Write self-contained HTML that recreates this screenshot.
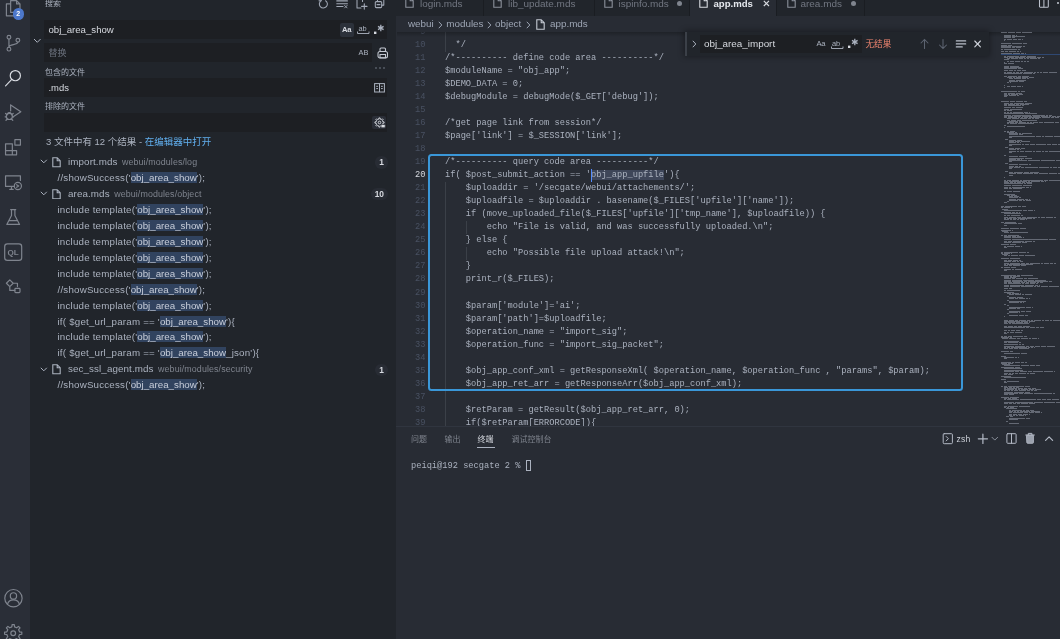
<!DOCTYPE html><html lang="zh-CN"><head><meta charset="utf-8"><title>app.mds</title><style>
*{box-sizing:border-box;margin:0;padding:0}
html,body{width:1060px;height:639px;overflow:hidden;background:#282c34}
body{position:relative;font-family:"Liberation Sans","Noto Sans CJK SC",sans-serif;color:#abb2bf;font-size:9.4px;-webkit-font-smoothing:antialiased;filter:blur(.5px)}
.abs{position:absolute}
#act{left:0;top:0;width:30px;height:639px;background:#2a2e37}
#act svg{position:absolute;left:2.5px;width:20.4px;height:20.4px;fill:none;stroke:#7f848e;stroke-width:1.4;stroke-linecap:round;stroke-linejoin:round}
#act svg.on{stroke:#d7dae0}
#side{left:30px;top:0;width:366.3px;height:639px;background:#21252b}
.inp{position:absolute;background:#1d1f23;height:19px}
.lbl{position:absolute;font-size:8px;color:#abb2bf;line-height:10px;white-space:nowrap}
.row{position:absolute;left:30px;width:366px;height:16px;line-height:16px;white-space:nowrap;color:#abb2bf;font-size:9.75px;letter-spacing:.2px}
.row .fn{position:absolute;left:38px;font-size:9.8px;letter-spacing:.1px}
.row .pth{font-size:8.9px;color:#7f848e;margin-left:4.5px;letter-spacing:.1px}
.row .m{position:absolute;left:27.5px}
.row .hl{background:#31435f;color:#c8ceda;letter-spacing:0}
.badge{position:absolute;top:2.4px;height:12.2px;border-radius:6.1px;background:#282c34;color:#d7dae0;font-size:8.4px;line-height:12.2px;text-align:center;font-weight:bold;letter-spacing:0}
.row svg{position:absolute;fill:none;stroke:#abb2bf;stroke-width:1}
#tabs{left:396px;top:0;width:664px;height:16px;background:#21252b}
.tab{position:absolute;top:0;height:16px;border-right:1px solid #1a1d22;color:#727782;font-size:9.95px;line-height:10px;white-space:nowrap}
.tab.on{background:#282c34;color:#e6e9ef;font-weight:bold;font-size:9.6px}
.tab span{position:absolute;top:-1.2px}
.tab svg{position:absolute;fill:none;stroke:#8a909b;stroke-width:1.1}
.tab.on svg{stroke:#d7dae0}
#bc{left:396px;top:16px;width:664px;height:16px;line-height:16px;font-size:9.85px;color:#9da5b4;white-space:nowrap}
#bc span{position:absolute;top:0}
.ln{position:absolute;left:396px;width:29.5px;text-align:right;font-family:"Liberation Mono",monospace;font-size:8.7px;height:13.045px;line-height:13.045px;color:#495162}
.ln.cur{color:#d7dae0}
.cl{position:absolute;left:445px;font-family:"Liberation Mono",monospace;font-size:8.7px;height:13.045px;line-height:13.045px;color:#abb2bf;white-space:pre}
.guide{position:absolute;width:1px;background:#3b4048}
#find{left:685px;top:32px;width:304px;height:24px;background:#21252b;box-shadow:0 0 5.8px 1.4px rgba(0,0,0,.36)}
#panel{left:396px;top:425.5px;width:664px;height:214px;background:#282c34;border-top:1.5px solid #30353f}
.ptab{position:absolute;top:8.2px;font-size:8px;line-height:10px;color:#7f848e;white-space:nowrap}
.mm{position:absolute;height:1.1px;background:#abb2bf}
</style></head><body>
<div id="act" class="abs">
<svg viewBox="0 0 24 24" style="top:-2.0px" class=""><path d="M9 3h7l4 4v10H9z M16 3v4h4 M9 7H4v14h11v-4"/></svg>
<svg viewBox="0 0 24 24" style="top:32.8px" class=""><circle cx="7" cy="5" r="2.2"/><circle cx="7" cy="19" r="2.2"/><circle cx="17.5" cy="8.5" r="2.2"/><path d="M7 7.2v9.6 M17.5 10.7c0 4-10.5 2-10.5 6"/></svg>
<svg viewBox="0 0 24 24" style="top:67.6px" class="on" stroke-width="1.6"><circle cx="14.5" cy="9" r="6"/><path d="M10.3 13.4L3 21"/></svg>
<svg viewBox="0 0 24 24" style="top:102.4px" class=""><path d="M9 3.5l12 8-9 6"/><path d="M9 3.5v7"/><circle cx="7.5" cy="17" r="3.6"/><path d="M3 13.5l2 1.5 M12 13.5l-2 1.5 M2.5 17.5h1.5 M11 17.5h1.5 M3.5 21.5l1.7-1.5 M11.5 21.5l-1.7-1.5 M5.5 13.6c.5-1.6 3.5-1.6 4 0"/></svg>
<svg viewBox="0 0 24 24" style="top:137.2px" class=""><path d="M3 8h8v8H3z M3 16v5h8v-5 M11 16h5v5h-5 M14 3h6.5v6.5H14z"/></svg>
<svg viewBox="0 0 24 24" style="top:172.0px" class=""><path d="M13 17H3V4.5h17.5V10 M8 20.5h4 M10 17v3.5"/><circle cx="17.5" cy="16.5" r="4.2"/><path d="M16 15l2.5 1.5-2.5 1.5"/></svg>
<svg viewBox="0 0 24 24" style="top:206.8px" class=""><path d="M9 3h6 M10 3v7L4.5 20.5h15L14 10V3 M7 16h10"/></svg>
<svg viewBox="0 0 24 24" style="top:241.6px" class=""><rect x="2" y="2.300" width="20" height="19.400" rx="3.200"/><text x="12" y="15.500" font-size="9.500" font-family="Liberation Sans,sans-serif" font-weight="bold" text-anchor="middle" fill="#7f848e" stroke="none">QL</text></svg>
<svg viewBox="0 0 24 24" style="top:276.4px" class=""><path d="M4 8.5l4-4 4 4-4 4z M8 12.5V17h6 M12 8.5h5v4"/><rect x="14" y="14.5" width="6" height="5" rx="1"/></svg>
<svg viewBox="0 0 24 24" style="top:588.1px" class=""><circle cx="12.3" cy="12" r="10.2"/><circle cx="12.3" cy="9.3" r="3.7"/><path d="M5.3 19.300c1.500-7 12.500-7 14 0"/></svg>
<svg viewBox="0 0 24 24" style="top:622.8px" class=""><circle cx="12" cy="12" r="2.8"/><path d="M10.40 4.57 L10.72 1.88 L13.28 1.88 L13.60 4.57 L16.12 5.62 L18.25 3.94 L20.06 5.75 L18.38 7.88 L19.43 10.40 L22.12 10.72 L22.12 13.28 L19.43 13.60 L18.38 16.12 L20.06 18.25 L18.25 20.06 L16.12 18.38 L13.60 19.43 L13.28 22.12 L10.72 22.12 L10.40 19.43 L7.88 18.38 L5.75 20.06 L3.94 18.25 L5.62 16.12 L4.57 13.60 L1.88 13.28 L1.88 10.72 L4.57 10.40 L5.62 7.88 L3.94 5.75 L5.75 3.94 L7.88 5.62Z"/></svg>
<div class="abs" style="left:12.5px;top:8.3px;width:11.6px;height:11.6px;border-radius:6px;background:#4d78cc;color:#fff;font-size:7px;line-height:11.6px;text-align:center;font-weight:bold">2</div>
</div>
<div id="side" class="abs"></div>
<div class="lbl" style="left:45px;top:-1.5px;font-size:8px;color:#abb2bf">搜索</div>
<svg class="abs" style="left:316px;top:-4px" width="76" height="16" viewBox="316 -4 76 16" fill="none" stroke="#a2a9b6" stroke-width="1.05" stroke-linecap="round" stroke-linejoin="round"><path d="M325.600 0.700a4 4 0 1 1-4.300-.100 M321.200 -1.600v2.300h-2.200"/><path d="M336.800 0.900h10.600 M336.800 3.700h10.600 M336.800 6.500h6.200" stroke-width="1.15"/><path d="M344.600 5.400l2.500 2.500 M347.100 5.400l-2.500 2.500" stroke-width=".9"/><path d="M362.500 1.500v-4l-1.500-1.500h-4v12h4"/><path d="M364.300 3.700v5.400 M361.600 6.400h5.400" stroke-width="1.1"/><rect x="375.300" y="1.600" width="6.400" height="6" rx="1"/><path d="M377.500 1.400v-2.300h6.300v6h-2 M377 4.600h3" /></svg>
<div class="inp" style="left:44.4px;top:20.4px;width:342.8px;height:18.8px"></div>
<div class="abs" style="left:48.5px;top:24px;font-size:9.65px;line-height:11px;color:#d7dae0;white-space:nowrap">obj_area_show</div>
<div class="abs" style="left:340px;top:22.5px;width:14px;height:14px;background:#2c313a;border-radius:2px"></div>
<div class="abs" style="left:342px;top:24.5px;font-size:7.6px;line-height:10px;color:#d7dae0;font-weight:bold;letter-spacing:-.3px">Aa</div>
<div class="abs" style="left:358.5px;top:24px;font-size:7.4px;line-height:10px;color:#abb2bf;letter-spacing:-.2px">ab</div>
<svg class="abs" style="left:356.5px;top:31px" width="13" height="4" viewBox="0 0 13 4" fill="none" stroke="#abb2bf" stroke-width=".9"><path d="M.5 .5v2h11.5v-2"/></svg>
<svg class="abs" style="left:373px;top:24px" width="12" height="12" viewBox="0 0 12 12" fill="none" stroke="#abb2bf" stroke-width="1.1"><rect x="1" y="7.6" width="2.4" height="2.4" fill="#d7dae0" stroke="none"/><path d="M7.8 .8v6.400 M5 2.400l5.600 3.200 M10.600 2.400l-5.600 3.200" stroke-width="1.3"/></svg>
<svg class="abs" style="left:33px;top:38px" width="9" height="6" viewBox="0 0 9 6" fill="none" stroke="#abb2bf" stroke-width="1"><path d="M1 1l3.3 3.3L7.6 1"/></svg>
<div class="inp" style="left:44.4px;top:43.4px;width:327.800px;height:18.8px"></div>
<div class="abs" style="left:48.5px;top:47.5px;font-size:9px;line-height:11px;color:#6b717d;white-space:nowrap">替换</div>
<div class="abs" style="left:358.5px;top:48px;font-size:7.4px;line-height:10px;color:#abb2bf">AB</div>
<svg class="abs" style="left:377px;top:46.5px" width="12" height="13" viewBox="0 0 12 13" fill="none" stroke="#c5cad3" stroke-width="1.05"><rect x="3" y="1" width="5.5" height="3.5" rx="1"/><rect x="1" y="4.5" width="9.5" height="6.5" rx="2"/><path d="M3 7.5h5.5v3.3h-5.5z"/></svg>
<div class="abs" style="left:375px;top:67.3px;width:2px;height:2px;border-radius:1px;background:#555b66;box-shadow:4px 0 #555b66,8px 0 #555b66"></div>
<div class="lbl" style="left:45px;top:67.7px">包含的文件</div>
<div class="inp" style="left:44.4px;top:78.300px;width:342.800px;height:19px"></div>
<div class="abs" style="left:48.5px;top:82px;font-size:9.45px;line-height:11px;color:#d7dae0">.mds</div>
<svg class="abs" style="left:373.5px;top:82.5px" width="11" height="10" viewBox="0 0 11 10" fill="none" stroke="#abb2bf" stroke-width="1"><rect x=".6" y=".6" width="9.8" height="8.4"/><path d="M5.5 .6v8.4 M2.2 3.3h1.8 M2.2 5.6h1.8 M7 3.3h1.8 M7 5.6h1.8"/></svg>
<div class="lbl" style="left:45px;top:101.7px">排除的文件</div>
<div class="inp" style="left:44.4px;top:113px;width:342.800px;height:19.300px"></div>
<div class="abs" style="left:372.3px;top:115.700px;width:14.2px;height:13.800px;background:#2a2e37;border-radius:2px"></div>
<svg class="abs" style="left:374px;top:117px" width="12" height="12" viewBox="0 0 12 12" fill="none" stroke="#d7dae0" stroke-width=".95" stroke-linejoin="round"><path d="M4.76 2.18 L4.89 0.94 L6.11 0.94 L6.24 2.18 L7.32 2.63 L8.29 1.84 L9.16 2.71 L8.37 3.68 L8.82 4.76 L10.06 4.89 L10.06 6.11 L8.82 6.24 L8.37 7.32 L9.16 8.29 L8.29 9.16 L7.32 8.37 L6.24 8.82 L6.11 10.06 L4.89 10.06 L4.76 8.82 L3.68 8.37 L2.71 9.16 L1.84 8.29 L2.63 7.32 L2.18 6.24 L0.94 6.11 L0.94 4.89 L2.18 4.76 L2.63 3.68 L1.84 2.71 L2.71 1.84 L3.68 2.63Z"/><circle cx="5.5" cy="5.5" r="1.3"/><rect x="7" y="7.400" width="4.200" height="3.400" rx=".8" fill="#d7dae0" stroke="#2a2e37" stroke-width=".7"/></svg>
<div class="abs" style="left:46px;top:136px;font-size:9.5px;line-height:11px;color:#abb2bf;white-space:nowrap">3 文件中有 12 个结果 - <span style="color:#61afef">在编辑器中打开</span></div>
<div class="row" style="top:154.0px">
<svg style="left:9.5px;top:5.2px" width="8" height="6" viewBox="0 0 8 6"><path d="M.8 .8l3 3 3-3"/></svg>
<svg style="left:22.3px;top:3px" width="9" height="10.5" viewBox="0 0 9 10.5"><path d="M.8 .7h4.4l3 3v6H.8z M5.2 .7v3h3" stroke-width="1.1"/></svg>
<span class="fn">import.mds<span class="pth">webui/modules/log</span></span>
<div class="badge" style="left:345.4px;width:12.6px">1</div>
</div>
<div class="row" style="top:169.9px"><span class="m">//showSuccess(&#x27;<span class="hl">obj_area_show</span>&#x27;);</span></div>
<div class="row" style="top:185.9px">
<svg style="left:9.5px;top:5.2px" width="8" height="6" viewBox="0 0 8 6"><path d="M.8 .8l3 3 3-3"/></svg>
<svg style="left:22.3px;top:3px" width="9" height="10.5" viewBox="0 0 9 10.5"><path d="M.8 .7h4.4l3 3v6H.8z M5.2 .7v3h3" stroke-width="1.1"/></svg>
<span class="fn">area.mds<span class="pth">webui/modules/object</span></span>
<div class="badge" style="left:340.6px;width:17.4px">10</div>
</div>
<div class="row" style="top:201.8px"><span class="m">include template(&#x27;<span class="hl">obj_area_show</span>&#x27;);</span></div>
<div class="row" style="top:217.8px"><span class="m">include template(&#x27;<span class="hl">obj_area_show</span>&#x27;);</span></div>
<div class="row" style="top:233.8px"><span class="m">include template(&#x27;<span class="hl">obj_area_show</span>&#x27;);</span></div>
<div class="row" style="top:249.7px"><span class="m">include template(&#x27;<span class="hl">obj_area_show</span>&#x27;);</span></div>
<div class="row" style="top:265.6px"><span class="m">include template(&#x27;<span class="hl">obj_area_show</span>&#x27;);</span></div>
<div class="row" style="top:281.6px"><span class="m">//showSuccess(&#x27;<span class="hl">obj_area_show</span>&#x27;);</span></div>
<div class="row" style="top:297.5px"><span class="m">include template(&#x27;<span class="hl">obj_area_show</span>&#x27;);</span></div>
<div class="row" style="top:313.5px"><span class="m">if( $get_url_param == &#x27;<span class="hl">obj_area_show</span>&#x27;){</span></div>
<div class="row" style="top:329.4px"><span class="m">include template(&#x27;<span class="hl">obj_area_show</span>&#x27;);</span></div>
<div class="row" style="top:345.4px"><span class="m">if( $get_url_param == &#x27;<span class="hl">obj_area_show</span>_json&#x27;){</span></div>
<div class="row" style="top:361.4px">
<svg style="left:9.5px;top:5.2px" width="8" height="6" viewBox="0 0 8 6"><path d="M.8 .8l3 3 3-3"/></svg>
<svg style="left:22.3px;top:3px" width="9" height="10.5" viewBox="0 0 9 10.5"><path d="M.8 .7h4.4l3 3v6H.8z M5.2 .7v3h3" stroke-width="1.1"/></svg>
<span class="fn">sec_ssl_agent.mds<span class="pth">webui/modules/security</span></span>
<div class="badge" style="left:345.4px;width:12.6px">1</div>
</div>
<div class="row" style="top:377.3px"><span class="m">//showSuccess(&#x27;<span class="hl">obj_area_show</span>&#x27;);</span></div>
<div id="tabs" class="abs"></div>
<div class="tab" style="left:396.0px;width:87.5px">
<svg style="left:8.5px;top:-3px" width="9" height="11" viewBox="0 0 9 11"><path d="M.8 .7h4.4l3 3v6.5H.8z M5.2 .7v3h3"/></svg>
<span style="left:24.0px">login.mds</span>
</div>
<div class="tab" style="left:483.5px;width:111.0px">
<svg style="left:9.5px;top:-3px" width="9" height="11" viewBox="0 0 9 11"><path d="M.8 .7h4.4l3 3v6.5H.8z M5.2 .7v3h3"/></svg>
<span style="left:24.5px">lib_update.mds</span>
</div>
<div class="tab" style="left:594.5px;width:95.5px">
<svg style="left:9.5px;top:-3px" width="9" height="11" viewBox="0 0 9 11"><path d="M.8 .7h4.4l3 3v6.5H.8z M5.2 .7v3h3"/></svg>
<span style="left:24.0px">ispinfo.mds</span>
<div class="abs" style="left:82.3px;top:0.5px;width:5.4px;height:5.4px;border-radius:3px;background:#7f848e"></div>
</div>
<div class="tab on" style="left:690.0px;width:86.5px">
<svg style="left:9.0px;top:-3px" width="9" height="11" viewBox="0 0 9 11"><path d="M.8 .7h4.4l3 3v6.5H.8z M5.2 .7v3h3"/></svg>
<span style="left:23.5px">app.mds</span>
<svg style="left:72.8px;top:0.3px;stroke:#d7dae0" width="7" height="7" viewBox="0 0 7 7"><path d="M.8 .8l5.2 5.2 M6 .8L.8 6"/></svg>
</div>
<div class="tab" style="left:776.5px;width:88.5px">
<svg style="left:10.5px;top:-3px" width="9" height="11" viewBox="0 0 9 11"><path d="M.8 .7h4.4l3 3v6.5H.8z M5.2 .7v3h3"/></svg>
<span style="left:24.0px">area.mds</span>
<div class="abs" style="left:74.1px;top:0.5px;width:5.4px;height:5.4px;border-radius:3px;background:#7f848e"></div>
</div>
<svg class="abs" style="left:1038px;top:-4px" width="12" height="13" viewBox="0 0 12 13" fill="none" stroke="#bcc2cd" stroke-width="1.05"><rect x="1.500" y="-2" width="8.800" height="13.200" rx=".8"/><path d="M5.900 -2v13.200"/></svg>
<div class="abs" style="left:1057.4px;top:2.4px;width:1.8px;height:1.8px;border-radius:1px;background:#c5cad3"></div>
<div id="bc" class="abs">
<span style="left:12.0px">webui</span>
<span style="left:50.3px">modules</span>
<span style="left:99.0px">object</span>
<span style="left:154.0px">app.mds</span>
<svg class="abs" style="left:41.5px;top:4.5px" width="5" height="8" viewBox="0 0 5 8" fill="none" stroke="#9da5b4" stroke-width="1"><path d="M.8 .8l3 3.2-3 3.2"/></svg>
<svg class="abs" style="left:90.5px;top:4.5px" width="5" height="8" viewBox="0 0 5 8" fill="none" stroke="#9da5b4" stroke-width="1"><path d="M.8 .8l3 3.2-3 3.2"/></svg>
<svg class="abs" style="left:129.5px;top:4.5px" width="5" height="8" viewBox="0 0 5 8" fill="none" stroke="#9da5b4" stroke-width="1"><path d="M.8 .8l3 3.2-3 3.2"/></svg>
<svg class="abs" style="left:139.5px;top:2.5px" width="9" height="11" viewBox="0 0 9 11" fill="none" stroke="#c5cad3" stroke-width="1.1"><path d="M.8 .7h4.4l3 3v6.5H.8z M5.2 .7v3h3"/></svg>
</div>
<div class="abs" style="left:396px;top:32px;width:605px;height:394px;overflow:hidden"><div class="abs" style="left:-396px;top:-32px;width:1060px;height:639px">
<div class="ln" style="top:25.63px">9</div>
<div class="cl" style="top:25.63px">  *</div>
<div class="ln" style="top:38.68px">10</div>
<div class="cl" style="top:38.68px">  */</div>
<div class="ln" style="top:51.72px">11</div>
<div class="cl" style="top:51.72px">/*---------- define code area ----------*/</div>
<div class="ln" style="top:64.77px">12</div>
<div class="cl" style="top:64.77px">$moduleName = "obj_app";</div>
<div class="ln" style="top:77.81px">13</div>
<div class="cl" style="top:77.81px">$DEMO_DATA = 0;</div>
<div class="ln" style="top:90.86px">14</div>
<div class="cl" style="top:90.86px">$debugModule = debugMode($_GET['debug']);</div>
<div class="ln" style="top:103.90px">15</div>
<div class="ln" style="top:116.95px">16</div>
<div class="cl" style="top:116.95px">/*get page link from session*/</div>
<div class="ln" style="top:129.99px">17</div>
<div class="cl" style="top:129.99px">$page['link'] = $_SESSION['link'];</div>
<div class="ln" style="top:143.04px">18</div>
<div class="ln" style="top:156.08px">19</div>
<div class="cl" style="top:156.08px">/*---------- query code area ----------*/</div>
<div class="ln cur" style="top:169.13px">20</div>
<div class="cl" style="top:169.13px">if( $post_submit_action == '<span style="background:#3e4659">obj_app_upfile</span>'){</div>
<div class="ln" style="top:182.17px">21</div>
<div class="cl" style="top:182.17px">    $uploaddir = '/secgate/webui/attachements/';</div>
<div class="ln" style="top:195.22px">22</div>
<div class="cl" style="top:195.22px">    $uploadfile = $uploaddir . basename($_FILES['upfile']['name']);</div>
<div class="ln" style="top:208.26px">23</div>
<div class="cl" style="top:208.26px">    if (move_uploaded_file($_FILES['upfile']['tmp_name'], $uploadfile)) {</div>
<div class="ln" style="top:221.31px">24</div>
<div class="cl" style="top:221.31px">        echo "File is valid, and was successfully uploaded.\n";</div>
<div class="ln" style="top:234.35px">25</div>
<div class="cl" style="top:234.35px">    } else {</div>
<div class="ln" style="top:247.40px">26</div>
<div class="cl" style="top:247.40px">        echo "Possible file upload attack!\n";</div>
<div class="ln" style="top:260.44px">27</div>
<div class="cl" style="top:260.44px">    }</div>
<div class="ln" style="top:273.49px">28</div>
<div class="cl" style="top:273.49px">    print_r($_FILES);</div>
<div class="ln" style="top:286.53px">29</div>
<div class="ln" style="top:299.58px">30</div>
<div class="cl" style="top:299.58px">    $param['module']='ai';</div>
<div class="ln" style="top:312.62px">31</div>
<div class="cl" style="top:312.62px">    $param['path']=$uploadfile;</div>
<div class="ln" style="top:325.67px">32</div>
<div class="cl" style="top:325.67px">    $operation_name = "import_sig";</div>
<div class="ln" style="top:338.71px">33</div>
<div class="cl" style="top:338.71px">    $operation_func = "import_sig_packet";</div>
<div class="ln" style="top:351.76px">34</div>
<div class="ln" style="top:364.80px">35</div>
<div class="cl" style="top:364.80px">    $obj_app_conf_xml = getResponseXml( $operation_name, $operation_func , "params", $param);</div>
<div class="ln" style="top:377.85px">36</div>
<div class="cl" style="top:377.85px">    $obj_app_ret_arr = getResponseArr($obj_app_conf_xml);</div>
<div class="ln" style="top:390.89px">37</div>
<div class="ln" style="top:403.94px">38</div>
<div class="cl" style="top:403.94px">    $retParam = getResult($obj_app_ret_arr, 0);</div>
<div class="ln" style="top:416.98px">39</div>
<div class="cl" style="top:416.98px">    if($retParam[ERRORCODE]){</div>
<div class="guide" style="left:445px;top:32px;height:19.7px"></div>
<div class="guide" style="left:445px;top:182.2px;height:243.8px"></div>
<div class="guide" style="left:465.9px;top:221.3px;height:13.0px"></div>
<div class="guide" style="left:465.9px;top:247.4px;height:13.0px"></div>
<div class="abs" style="left:591.2px;top:169.1px;width:1px;height:13.0px;background:#528bff"></div>
</div></div>
<div class="abs" style="left:397px;top:32px;width:663px;height:5px;background:linear-gradient(rgba(0,0,0,.24),rgba(0,0,0,0))"></div>
<div class="abs" style="left:428px;top:153.5px;width:534.5px;height:237px;border:2.4px solid #3a97d8;border-radius:3.5px"></div>
<div id="find" class="abs">
<div class="abs" style="left:0;top:0;width:2.4px;height:24px;background:#3b4048"></div>
<svg class="abs" style="left:6.5px;top:8px" width="5" height="8" viewBox="0 0 5 8" fill="none" stroke="#abb2bf" stroke-width="1"><path d="M.8 .8l3 3.2-3 3.2"/></svg>
<div class="abs" style="left:15px;top:3px;width:162px;height:18px;background:#1d1f23"></div>
<div class="abs" style="left:19px;top:5.7px;font-size:9.85px;line-height:11px;color:#d7dae0;white-space:nowrap">obj_area_import</div>
<div class="abs" style="left:131.5px;top:7px;font-size:7.6px;line-height:10px;color:#abb2bf;letter-spacing:-.3px">Aa</div>
<div class="abs" style="left:147px;top:6.5px;font-size:7.4px;line-height:10px;color:#abb2bf;letter-spacing:-.2px">ab</div>
<svg class="abs" style="left:145.5px;top:13.5px" width="13" height="4" viewBox="0 0 13 4" fill="none" stroke="#abb2bf" stroke-width=".9"><path d="M.5 .5v2h11.5v-2"/></svg>
<svg class="abs" style="left:162px;top:6px" width="12" height="12" viewBox="0 0 12 12" fill="none" stroke="#abb2bf" stroke-width="1.1"><rect x="1" y="7.6" width="2.4" height="2.4" fill="#d7dae0" stroke="none"/><path d="M7.8 .8v6.400 M5 2.400l5.600 3.200 M10.600 2.400l-5.600 3.200" stroke-width="1.3"/></svg>
<div class="abs" style="left:180.5px;top:7px;font-size:8.6px;line-height:10px;color:#f48771;white-space:nowrap">无结果</div>
<svg class="abs" style="left:234px;top:6px" width="64" height="12" viewBox="0 0 64 12" fill="none" stroke-width="1.05" stroke-linecap="round"><path d="M5.5 10.5v-9 M2 5l3.500-3.500 3.500 3.500" stroke="#5c6370"/><path d="M24 1.500v9 M20.500 7l3.500 3.500 3.500-3.500" stroke="#5c6370"/><path d="M37.300 2.900h9.400 M37.300 5.900h9.400 M37.300 8.900h6" stroke="#b9bfca" stroke-width="1.15"/><path d="M55.800 3l5.600 5.800 M61.400 3l-5.600 5.800" stroke="#cdd1d9" stroke-width="1.15"/></svg>
</div>
<div class="abs" style="left:1001px;top:32px;width:59px;height:393px;overflow:hidden;opacity:.46">
<div class="mm" style="left:0.3px;top:-0.2px;width:5.6px"></div>
<div class="mm" style="left:6.6px;top:-0.2px;width:7.5px"></div>
<div class="mm" style="left:14.8px;top:-0.2px;width:5.6px"></div>
<div class="mm" style="left:21.1px;top:-0.2px;width:5.6px"></div>
<div class="mm" style="left:27.4px;top:-0.2px;width:3.9px"></div>
<div class="mm" style="left:2.8px;top:2.5px;width:7.5px"></div>
<div class="mm" style="left:11.0px;top:2.5px;width:3.1px"></div>
<div class="mm" style="left:14.8px;top:2.5px;width:1.5px"></div>
<div class="mm" style="left:2.8px;top:3.8px;width:7.5px"></div>
<div class="mm" style="left:11.0px;top:3.8px;width:5.6px"></div>
<div class="mm" style="left:17.3px;top:3.8px;width:6.5px"></div>
<div class="mm" style="left:2.8px;top:5.0px;width:7.5px"></div>
<div class="mm" style="left:11.0px;top:5.0px;width:3.1px"></div>
<div class="mm" style="left:2.8px;top:6.5px;width:2.2px"></div>
<div class="mm" style="left:5.7px;top:6.5px;width:5.6px"></div>
<div class="mm" style="left:12.0px;top:6.5px;width:4.3px"></div>
<div class="mm" style="left:17.0px;top:6.5px;width:3.1px"></div>
<div class="mm" style="left:20.8px;top:6.5px;width:0.5px"></div>
<div class="mm" style="left:2.8px;top:8.1px;width:1.6px"></div>
<div class="mm" style="left:0.3px;top:11.0px;width:9.9px"></div>
<div class="mm" style="left:10.9px;top:11.0px;width:9.9px"></div>
<div class="mm" style="left:21.5px;top:11.0px;width:2.2px"></div>
<div class="mm" style="left:24.4px;top:11.0px;width:1.3px"></div>
<div class="mm" style="left:0.3px;top:12.5px;width:5.6px"></div>
<div class="mm" style="left:6.6px;top:12.5px;width:4.7px"></div>
<div class="mm" style="left:0.3px;top:13.8px;width:9.9px"></div>
<div class="mm" style="left:10.9px;top:13.8px;width:9.9px"></div>
<div class="mm" style="left:21.5px;top:13.8px;width:2.9px"></div>
<div class="mm" style="left:0.3px;top:15.2px;width:9.9px"></div>
<div class="mm" style="left:10.9px;top:15.2px;width:3.1px"></div>
<div class="mm" style="left:14.7px;top:15.2px;width:5.4px"></div>
<div class="mm" style="left:0.3px;top:17.2px;width:2.2px"></div>
<div class="mm" style="left:3.2px;top:17.2px;width:7.5px"></div>
<div class="mm" style="left:11.4px;top:17.2px;width:2.2px"></div>
<div class="mm" style="left:14.3px;top:17.2px;width:2.2px"></div>
<div class="mm" style="left:17.2px;top:17.2px;width:1.6px"></div>
<div class="mm" style="left:0.3px;top:18.5px;width:3.1px"></div>
<div class="mm" style="left:4.1px;top:18.5px;width:3.1px"></div>
<div class="mm" style="left:7.9px;top:18.5px;width:7.5px"></div>
<div class="mm" style="left:16.1px;top:18.5px;width:2.2px"></div>
<div class="mm" style="left:19.0px;top:18.5px;width:1.1px"></div>
<div class="mm" style="left:0.3px;top:20.8px;width:4.3px"></div>
<div class="mm" style="left:5.3px;top:20.8px;width:5.6px"></div>
<div class="mm" style="left:11.6px;top:20.8px;width:7.5px"></div>
<div class="mm" style="left:19.8px;top:20.8px;width:3.1px"></div>
<div class="mm" style="left:23.6px;top:20.8px;width:1.5px"></div>
<div class="mm" style="left:2.8px;top:22.2px;width:3.1px"></div>
<div class="mm" style="left:6.6px;top:22.2px;width:9.9px"></div>
<div class="mm" style="left:17.2px;top:22.2px;width:4.3px"></div>
<div class="mm" style="left:22.2px;top:22.2px;width:5.6px"></div>
<div class="mm" style="left:2.8px;top:23.8px;width:2.2px"></div>
<div class="mm" style="left:5.7px;top:23.8px;width:9.9px"></div>
<div class="mm" style="left:16.3px;top:23.8px;width:2.2px"></div>
<div class="mm" style="left:19.2px;top:23.8px;width:5.6px"></div>
<div class="mm" style="left:25.5px;top:23.8px;width:9.9px"></div>
<div class="mm" style="left:2.8px;top:24.8px;width:4.3px"></div>
<div class="mm" style="left:7.8px;top:24.8px;width:5.6px"></div>
<div class="mm" style="left:14.1px;top:24.8px;width:7.5px"></div>
<div class="mm" style="left:22.3px;top:24.8px;width:2.2px"></div>
<div class="mm" style="left:25.2px;top:24.8px;width:9.9px"></div>
<div class="mm" style="left:35.8px;top:24.8px;width:4.3px"></div>
<div class="mm" style="left:40.8px;top:24.8px;width:1.8px"></div>
<div class="mm" style="left:5.7px;top:26.0px;width:3.1px"></div>
<div class="mm" style="left:9.5px;top:26.0px;width:7.5px"></div>
<div class="mm" style="left:17.7px;top:26.0px;width:4.3px"></div>
<div class="mm" style="left:22.7px;top:26.0px;width:2.2px"></div>
<div class="mm" style="left:25.6px;top:26.0px;width:2.2px"></div>
<div class="mm" style="left:28.5px;top:26.0px;width:7.5px"></div>
<div class="mm" style="left:36.7px;top:26.0px;width:2.1px"></div>
<div class="mm" style="left:2.8px;top:27.2px;width:4.8px"></div>
<div class="mm" style="left:5.7px;top:28.8px;width:2.2px"></div>
<div class="mm" style="left:8.6px;top:28.8px;width:4.3px"></div>
<div class="mm" style="left:13.6px;top:28.8px;width:5.6px"></div>
<div class="mm" style="left:19.9px;top:28.8px;width:2.2px"></div>
<div class="mm" style="left:22.8px;top:28.8px;width:2.2px"></div>
<div class="mm" style="left:25.7px;top:28.8px;width:1.9px"></div>
<div class="mm" style="left:2.8px;top:29.8px;width:1.0px"></div>
<div class="mm" style="left:2.8px;top:31.2px;width:3.1px"></div>
<div class="mm" style="left:6.6px;top:31.2px;width:3.1px"></div>
<div class="mm" style="left:10.4px;top:31.2px;width:2.2px"></div>
<div class="mm" style="left:2.8px;top:33.8px;width:5.6px"></div>
<div class="mm" style="left:9.1px;top:33.8px;width:5.6px"></div>
<div class="mm" style="left:15.4px;top:33.8px;width:2.2px"></div>
<div class="mm" style="left:2.8px;top:35.0px;width:5.6px"></div>
<div class="mm" style="left:9.1px;top:35.0px;width:5.6px"></div>
<div class="mm" style="left:15.4px;top:35.0px;width:2.2px"></div>
<div class="mm" style="left:18.3px;top:35.0px;width:1.8px"></div>
<div class="mm" style="left:2.8px;top:36.4px;width:9.9px"></div>
<div class="mm" style="left:13.4px;top:36.4px;width:3.1px"></div>
<div class="mm" style="left:17.2px;top:36.4px;width:4.7px"></div>
<div class="mm" style="left:2.8px;top:37.8px;width:4.3px"></div>
<div class="mm" style="left:7.8px;top:37.8px;width:4.3px"></div>
<div class="mm" style="left:12.8px;top:37.8px;width:2.2px"></div>
<div class="mm" style="left:15.7px;top:37.8px;width:4.3px"></div>
<div class="mm" style="left:20.7px;top:37.8px;width:4.3px"></div>
<div class="mm" style="left:2.8px;top:40.0px;width:2.2px"></div>
<div class="mm" style="left:5.7px;top:40.0px;width:5.6px"></div>
<div class="mm" style="left:12.0px;top:40.0px;width:2.2px"></div>
<div class="mm" style="left:14.9px;top:40.0px;width:3.1px"></div>
<div class="mm" style="left:18.7px;top:40.0px;width:3.1px"></div>
<div class="mm" style="left:22.5px;top:40.0px;width:9.9px"></div>
<div class="mm" style="left:33.1px;top:40.0px;width:2.2px"></div>
<div class="mm" style="left:36.0px;top:40.0px;width:2.2px"></div>
<div class="mm" style="left:38.9px;top:40.0px;width:2.2px"></div>
<div class="mm" style="left:41.8px;top:40.0px;width:5.6px"></div>
<div class="mm" style="left:48.1px;top:40.0px;width:5.6px"></div>
<div class="mm" style="left:54.4px;top:40.0px;width:1.9px"></div>
<div class="mm" style="left:2.8px;top:41.2px;width:9.9px"></div>
<div class="mm" style="left:13.4px;top:41.2px;width:7.5px"></div>
<div class="mm" style="left:21.6px;top:41.2px;width:3.1px"></div>
<div class="mm" style="left:25.4px;top:41.2px;width:5.6px"></div>
<div class="mm" style="left:31.7px;top:41.2px;width:2.1px"></div>
<div class="mm" style="left:2.8px;top:43.8px;width:3.1px"></div>
<div class="mm" style="left:6.6px;top:43.8px;width:9.9px"></div>
<div class="mm" style="left:17.2px;top:43.8px;width:3.1px"></div>
<div class="mm" style="left:21.0px;top:43.8px;width:5.6px"></div>
<div class="mm" style="left:27.3px;top:43.8px;width:0.9px"></div>
<div class="mm" style="left:5.7px;top:45.0px;width:5.6px"></div>
<div class="mm" style="left:12.0px;top:45.0px;width:2.2px"></div>
<div class="mm" style="left:14.9px;top:45.0px;width:5.6px"></div>
<div class="mm" style="left:21.2px;top:45.0px;width:5.6px"></div>
<div class="mm" style="left:27.5px;top:45.0px;width:3.1px"></div>
<div class="mm" style="left:31.3px;top:45.0px;width:1.3px"></div>
<div class="mm" style="left:7.5px;top:46.2px;width:4.3px"></div>
<div class="mm" style="left:12.6px;top:46.2px;width:7.5px"></div>
<div class="mm" style="left:20.8px;top:46.2px;width:4.3px"></div>
<div class="mm" style="left:25.8px;top:46.2px;width:2.2px"></div>
<div class="mm" style="left:7.5px;top:47.5px;width:3.1px"></div>
<div class="mm" style="left:11.3px;top:47.5px;width:3.1px"></div>
<div class="mm" style="left:15.1px;top:47.5px;width:5.6px"></div>
<div class="mm" style="left:21.4px;top:47.5px;width:3.6px"></div>
<div class="mm" style="left:7.5px;top:48.8px;width:9.9px"></div>
<div class="mm" style="left:18.1px;top:48.8px;width:5.0px"></div>
<div class="mm" style="left:5.7px;top:50.0px;width:2.2px"></div>
<div class="mm" style="left:8.6px;top:50.0px;width:0.9px"></div>
<div class="mm" style="left:2.8px;top:52.5px;width:1.0px"></div>
<div class="mm" style="left:5.7px;top:54.0px;width:3.1px"></div>
<div class="mm" style="left:9.5px;top:54.0px;width:5.6px"></div>
<div class="mm" style="left:15.8px;top:54.0px;width:4.3px"></div>
<div class="mm" style="left:20.8px;top:54.0px;width:0.5px"></div>
<div class="mm" style="left:2.8px;top:55.0px;width:1.6px"></div>
<div class="mm" style="left:0.3px;top:59.0px;width:4.3px"></div>
<div class="mm" style="left:5.3px;top:59.0px;width:4.3px"></div>
<div class="mm" style="left:10.3px;top:59.0px;width:5.6px"></div>
<div class="mm" style="left:16.6px;top:59.0px;width:2.2px"></div>
<div class="mm" style="left:19.5px;top:59.0px;width:2.2px"></div>
<div class="mm" style="left:22.4px;top:59.0px;width:1.4px"></div>
<div class="mm" style="left:2.8px;top:60.6px;width:3.1px"></div>
<div class="mm" style="left:6.6px;top:60.6px;width:7.5px"></div>
<div class="mm" style="left:14.8px;top:60.6px;width:6.5px"></div>
<div class="mm" style="left:2.8px;top:61.9px;width:3.1px"></div>
<div class="mm" style="left:6.6px;top:61.9px;width:2.2px"></div>
<div class="mm" style="left:9.5px;top:61.9px;width:7.5px"></div>
<div class="mm" style="left:17.7px;top:61.9px;width:4.2px"></div>
<div class="mm" style="left:2.8px;top:63.1px;width:4.3px"></div>
<div class="mm" style="left:7.8px;top:63.1px;width:7.5px"></div>
<div class="mm" style="left:16.0px;top:63.1px;width:2.2px"></div>
<div class="mm" style="left:2.8px;top:64.4px;width:3.1px"></div>
<div class="mm" style="left:0.3px;top:68.8px;width:7.5px"></div>
<div class="mm" style="left:8.5px;top:68.8px;width:5.6px"></div>
<div class="mm" style="left:14.8px;top:68.8px;width:7.5px"></div>
<div class="mm" style="left:23.0px;top:68.8px;width:3.1px"></div>
<div class="mm" style="left:2.8px;top:71.0px;width:5.6px"></div>
<div class="mm" style="left:9.1px;top:71.0px;width:3.1px"></div>
<div class="mm" style="left:12.9px;top:71.0px;width:9.9px"></div>
<div class="mm" style="left:23.5px;top:71.0px;width:3.1px"></div>
<div class="mm" style="left:27.3px;top:71.0px;width:4.0px"></div>
<div class="mm" style="left:2.8px;top:72.2px;width:3.1px"></div>
<div class="mm" style="left:6.6px;top:72.2px;width:7.5px"></div>
<div class="mm" style="left:14.8px;top:72.2px;width:3.1px"></div>
<div class="mm" style="left:18.6px;top:72.2px;width:9.9px"></div>
<div class="mm" style="left:2.8px;top:73.1px;width:3.1px"></div>
<div class="mm" style="left:6.6px;top:73.1px;width:3.1px"></div>
<div class="mm" style="left:10.4px;top:73.1px;width:9.9px"></div>
<div class="mm" style="left:21.0px;top:73.1px;width:1.6px"></div>
<div class="mm" style="left:2.8px;top:75.2px;width:7.5px"></div>
<div class="mm" style="left:11.0px;top:75.2px;width:3.1px"></div>
<div class="mm" style="left:14.8px;top:75.2px;width:7.1px"></div>
<div class="mm" style="left:2.8px;top:76.5px;width:5.6px"></div>
<div class="mm" style="left:9.1px;top:76.5px;width:5.6px"></div>
<div class="mm" style="left:15.4px;top:76.5px;width:5.9px"></div>
<div class="mm" style="left:2.8px;top:77.8px;width:2.2px"></div>
<div class="mm" style="left:5.7px;top:77.8px;width:5.6px"></div>
<div class="mm" style="left:2.8px;top:80.0px;width:2.2px"></div>
<div class="mm" style="left:5.7px;top:80.0px;width:2.2px"></div>
<div class="mm" style="left:8.6px;top:80.0px;width:2.2px"></div>
<div class="mm" style="left:11.5px;top:80.0px;width:2.2px"></div>
<div class="mm" style="left:14.4px;top:80.0px;width:7.5px"></div>
<div class="mm" style="left:22.6px;top:80.0px;width:4.3px"></div>
<div class="mm" style="left:27.6px;top:80.0px;width:1.2px"></div>
<div class="mm" style="left:2.8px;top:81.2px;width:9.9px"></div>
<div class="mm" style="left:13.4px;top:81.2px;width:9.9px"></div>
<div class="mm" style="left:24.0px;top:81.2px;width:5.6px"></div>
<div class="mm" style="left:30.3px;top:81.2px;width:4.3px"></div>
<div class="mm" style="left:35.3px;top:81.2px;width:1.0px"></div>
<div class="mm" style="left:2.8px;top:82.5px;width:7.5px"></div>
<div class="mm" style="left:11.0px;top:82.5px;width:5.6px"></div>
<div class="mm" style="left:17.3px;top:82.5px;width:4.3px"></div>
<div class="mm" style="left:22.3px;top:82.5px;width:7.5px"></div>
<div class="mm" style="left:30.5px;top:82.5px;width:3.1px"></div>
<div class="mm" style="left:34.3px;top:82.5px;width:9.9px"></div>
<div class="mm" style="left:44.9px;top:82.5px;width:2.2px"></div>
<div class="mm" style="left:47.8px;top:82.5px;width:3.1px"></div>
<div class="mm" style="left:2.8px;top:83.8px;width:3.1px"></div>
<div class="mm" style="left:6.6px;top:83.8px;width:5.6px"></div>
<div class="mm" style="left:12.9px;top:83.8px;width:7.5px"></div>
<div class="mm" style="left:21.1px;top:83.8px;width:9.9px"></div>
<div class="mm" style="left:31.7px;top:83.8px;width:7.5px"></div>
<div class="mm" style="left:39.9px;top:83.8px;width:7.5px"></div>
<div class="mm" style="left:48.1px;top:83.8px;width:2.2px"></div>
<div class="mm" style="left:51.0px;top:83.8px;width:4.3px"></div>
<div class="mm" style="left:56.0px;top:83.8px;width:2.9px"></div>
<div class="mm" style="left:2.8px;top:85.0px;width:3.1px"></div>
<div class="mm" style="left:6.6px;top:85.0px;width:9.9px"></div>
<div class="mm" style="left:17.2px;top:85.0px;width:2.2px"></div>
<div class="mm" style="left:20.1px;top:85.0px;width:2.2px"></div>
<div class="mm" style="left:23.0px;top:85.0px;width:4.3px"></div>
<div class="mm" style="left:28.0px;top:85.0px;width:5.6px"></div>
<div class="mm" style="left:34.3px;top:85.0px;width:5.6px"></div>
<div class="mm" style="left:40.6px;top:85.0px;width:3.1px"></div>
<div class="mm" style="left:44.4px;top:85.0px;width:2.2px"></div>
<div class="mm" style="left:47.3px;top:85.0px;width:2.2px"></div>
<div class="mm" style="left:50.2px;top:85.0px;width:3.1px"></div>
<div class="mm" style="left:54.0px;top:85.0px;width:4.3px"></div>
<div class="mm" style="left:5.7px;top:86.2px;width:4.3px"></div>
<div class="mm" style="left:10.7px;top:86.2px;width:7.5px"></div>
<div class="mm" style="left:18.9px;top:86.2px;width:7.5px"></div>
<div class="mm" style="left:27.1px;top:86.2px;width:3.1px"></div>
<div class="mm" style="left:30.9px;top:86.2px;width:2.2px"></div>
<div class="mm" style="left:33.8px;top:86.2px;width:3.8px"></div>
<div class="mm" style="left:5.7px;top:87.5px;width:3.1px"></div>
<div class="mm" style="left:9.5px;top:87.5px;width:5.6px"></div>
<div class="mm" style="left:15.8px;top:87.5px;width:4.3px"></div>
<div class="mm" style="left:20.8px;top:87.5px;width:9.9px"></div>
<div class="mm" style="left:31.4px;top:87.5px;width:4.9px"></div>
<div class="mm" style="left:7.5px;top:88.8px;width:9.9px"></div>
<div class="mm" style="left:18.1px;top:88.8px;width:3.2px"></div>
<div class="mm" style="left:5.7px;top:90.0px;width:7.5px"></div>
<div class="mm" style="left:13.9px;top:90.0px;width:3.1px"></div>
<div class="mm" style="left:17.7px;top:90.0px;width:7.5px"></div>
<div class="mm" style="left:25.9px;top:90.0px;width:2.2px"></div>
<div class="mm" style="left:28.8px;top:90.0px;width:2.2px"></div>
<div class="mm" style="left:31.7px;top:90.0px;width:5.6px"></div>
<div class="mm" style="left:38.0px;top:90.0px;width:4.3px"></div>
<div class="mm" style="left:43.0px;top:90.0px;width:9.9px"></div>
<div class="mm" style="left:53.6px;top:90.0px;width:4.3px"></div>
<div class="mm" style="left:58.6px;top:90.0px;width:0.4px"></div>
<div class="mm" style="left:5.7px;top:91.2px;width:2.2px"></div>
<div class="mm" style="left:8.6px;top:91.2px;width:7.5px"></div>
<div class="mm" style="left:16.8px;top:91.2px;width:9.9px"></div>
<div class="mm" style="left:27.4px;top:91.2px;width:2.2px"></div>
<div class="mm" style="left:30.3px;top:91.2px;width:2.3px"></div>
<div class="mm" style="left:2.8px;top:92.5px;width:2.2px"></div>
<div class="mm" style="left:5.7px;top:94.0px;width:9.9px"></div>
<div class="mm" style="left:16.3px;top:94.0px;width:4.3px"></div>
<div class="mm" style="left:21.3px;top:94.0px;width:3.2px"></div>
<div class="mm" style="left:2.8px;top:95.2px;width:1.6px"></div>
<div class="mm" style="left:2.8px;top:98.5px;width:2.2px"></div>
<div class="mm" style="left:5.7px;top:98.5px;width:2.2px"></div>
<div class="mm" style="left:8.6px;top:98.5px;width:5.2px"></div>
<div class="mm" style="left:5.7px;top:99.8px;width:7.5px"></div>
<div class="mm" style="left:13.9px;top:99.8px;width:2.4px"></div>
<div class="mm" style="left:7.5px;top:101.0px;width:9.9px"></div>
<div class="mm" style="left:18.1px;top:101.0px;width:2.2px"></div>
<div class="mm" style="left:21.0px;top:101.0px;width:9.6px"></div>
<div class="mm" style="left:7.5px;top:102.2px;width:9.9px"></div>
<div class="mm" style="left:18.1px;top:102.2px;width:3.8px"></div>
<div class="mm" style="left:7.5px;top:103.8px;width:3.1px"></div>
<div class="mm" style="left:11.3px;top:103.8px;width:4.3px"></div>
<div class="mm" style="left:16.4px;top:103.8px;width:4.3px"></div>
<div class="mm" style="left:21.4px;top:103.8px;width:2.2px"></div>
<div class="mm" style="left:24.2px;top:103.8px;width:9.9px"></div>
<div class="mm" style="left:34.9px;top:103.8px;width:5.6px"></div>
<div class="mm" style="left:41.1px;top:103.8px;width:2.2px"></div>
<div class="mm" style="left:44.0px;top:103.8px;width:5.6px"></div>
<div class="mm" style="left:50.3px;top:103.8px;width:2.2px"></div>
<div class="mm" style="left:53.2px;top:103.8px;width:5.6px"></div>
<div class="mm" style="left:7.5px;top:105.0px;width:3.8px"></div>
<div class="mm" style="left:4.4px;top:106.9px;width:2.2px"></div>
<div class="mm" style="left:7.5px;top:107.8px;width:7.5px"></div>
<div class="mm" style="left:15.8px;top:107.8px;width:5.6px"></div>
<div class="mm" style="left:7.5px;top:109.0px;width:5.6px"></div>
<div class="mm" style="left:13.8px;top:109.0px;width:5.6px"></div>
<div class="mm" style="left:20.1px;top:109.0px;width:7.5px"></div>
<div class="mm" style="left:28.3px;top:109.0px;width:0.5px"></div>
<div class="mm" style="left:7.5px;top:110.2px;width:7.5px"></div>
<div class="mm" style="left:15.8px;top:110.2px;width:2.2px"></div>
<div class="mm" style="left:18.6px;top:110.2px;width:1.4px"></div>
<div class="mm" style="left:7.5px;top:111.5px;width:2.2px"></div>
<div class="mm" style="left:10.4px;top:111.5px;width:9.9px"></div>
<div class="mm" style="left:21.0px;top:111.5px;width:2.2px"></div>
<div class="mm" style="left:23.9px;top:111.5px;width:4.3px"></div>
<div class="mm" style="left:28.9px;top:111.5px;width:5.6px"></div>
<div class="mm" style="left:35.2px;top:111.5px;width:9.9px"></div>
<div class="mm" style="left:45.8px;top:111.5px;width:4.3px"></div>
<div class="mm" style="left:50.8px;top:111.5px;width:5.6px"></div>
<div class="mm" style="left:57.1px;top:111.5px;width:1.8px"></div>
<div class="mm" style="left:7.5px;top:112.8px;width:3.8px"></div>
<div class="mm" style="left:4.4px;top:114.6px;width:3.1px"></div>
<div class="mm" style="left:7.5px;top:115.9px;width:5.6px"></div>
<div class="mm" style="left:13.8px;top:115.9px;width:5.6px"></div>
<div class="mm" style="left:20.1px;top:115.9px;width:3.7px"></div>
<div class="mm" style="left:7.5px;top:117.1px;width:7.5px"></div>
<div class="mm" style="left:15.8px;top:117.1px;width:2.2px"></div>
<div class="mm" style="left:18.6px;top:117.1px;width:1.4px"></div>
<div class="mm" style="left:7.5px;top:118.8px;width:7.5px"></div>
<div class="mm" style="left:15.8px;top:118.8px;width:2.2px"></div>
<div class="mm" style="left:18.6px;top:118.8px;width:4.3px"></div>
<div class="mm" style="left:23.6px;top:118.8px;width:7.5px"></div>
<div class="mm" style="left:31.8px;top:118.8px;width:2.2px"></div>
<div class="mm" style="left:34.8px;top:118.8px;width:5.6px"></div>
<div class="mm" style="left:41.0px;top:118.8px;width:2.2px"></div>
<div class="mm" style="left:43.9px;top:118.8px;width:3.1px"></div>
<div class="mm" style="left:47.7px;top:118.8px;width:9.9px"></div>
<div class="mm" style="left:58.3px;top:118.8px;width:0.6px"></div>
<div class="mm" style="left:7.5px;top:120.0px;width:3.8px"></div>
<div class="mm" style="left:2.8px;top:122.5px;width:2.2px"></div>
<div class="mm" style="left:7.5px;top:124.4px;width:9.9px"></div>
<div class="mm" style="left:18.1px;top:124.4px;width:5.6px"></div>
<div class="mm" style="left:24.4px;top:124.4px;width:1.9px"></div>
<div class="mm" style="left:7.5px;top:125.6px;width:2.2px"></div>
<div class="mm" style="left:10.4px;top:125.6px;width:4.3px"></div>
<div class="mm" style="left:15.4px;top:125.6px;width:4.3px"></div>
<div class="mm" style="left:20.4px;top:125.6px;width:3.1px"></div>
<div class="mm" style="left:24.2px;top:125.6px;width:7.1px"></div>
<div class="mm" style="left:7.5px;top:126.9px;width:7.5px"></div>
<div class="mm" style="left:15.8px;top:126.9px;width:3.1px"></div>
<div class="mm" style="left:19.6px;top:126.9px;width:1.8px"></div>
<div class="mm" style="left:7.5px;top:128.1px;width:3.1px"></div>
<div class="mm" style="left:11.3px;top:128.1px;width:4.3px"></div>
<div class="mm" style="left:16.4px;top:128.1px;width:9.9px"></div>
<div class="mm" style="left:27.0px;top:128.1px;width:5.6px"></div>
<div class="mm" style="left:33.2px;top:128.1px;width:5.6px"></div>
<div class="mm" style="left:39.5px;top:128.1px;width:3.1px"></div>
<div class="mm" style="left:43.3px;top:128.1px;width:4.3px"></div>
<div class="mm" style="left:48.3px;top:128.1px;width:5.6px"></div>
<div class="mm" style="left:54.6px;top:128.1px;width:4.3px"></div>
<div class="mm" style="left:7.5px;top:129.4px;width:3.8px"></div>
<div class="mm" style="left:4.4px;top:131.0px;width:3.1px"></div>
<div class="mm" style="left:7.5px;top:132.2px;width:9.9px"></div>
<div class="mm" style="left:18.1px;top:132.2px;width:5.6px"></div>
<div class="mm" style="left:24.4px;top:132.2px;width:3.1px"></div>
<div class="mm" style="left:28.2px;top:132.2px;width:1.8px"></div>
<div class="mm" style="left:7.5px;top:133.5px;width:5.6px"></div>
<div class="mm" style="left:13.8px;top:133.5px;width:3.1px"></div>
<div class="mm" style="left:17.6px;top:133.5px;width:2.4px"></div>
<div class="mm" style="left:7.5px;top:135.0px;width:4.3px"></div>
<div class="mm" style="left:12.6px;top:135.0px;width:3.1px"></div>
<div class="mm" style="left:16.4px;top:135.0px;width:3.1px"></div>
<div class="mm" style="left:20.2px;top:135.0px;width:3.1px"></div>
<div class="mm" style="left:24.0px;top:135.0px;width:5.6px"></div>
<div class="mm" style="left:30.3px;top:135.0px;width:4.3px"></div>
<div class="mm" style="left:35.2px;top:135.0px;width:2.2px"></div>
<div class="mm" style="left:38.1px;top:135.0px;width:9.9px"></div>
<div class="mm" style="left:48.8px;top:135.0px;width:2.2px"></div>
<div class="mm" style="left:51.6px;top:135.0px;width:4.3px"></div>
<div class="mm" style="left:56.6px;top:135.0px;width:2.3px"></div>
<div class="mm" style="left:7.5px;top:136.2px;width:2.2px"></div>
<div class="mm" style="left:10.4px;top:136.2px;width:0.9px"></div>
<div class="mm" style="left:4.4px;top:138.8px;width:3.1px"></div>
<div class="mm" style="left:7.5px;top:140.0px;width:4.3px"></div>
<div class="mm" style="left:12.6px;top:140.0px;width:3.1px"></div>
<div class="mm" style="left:16.4px;top:140.0px;width:5.6px"></div>
<div class="mm" style="left:22.7px;top:140.0px;width:5.6px"></div>
<div class="mm" style="left:29.0px;top:140.0px;width:8.6px"></div>
<div class="mm" style="left:7.5px;top:141.2px;width:7.5px"></div>
<div class="mm" style="left:15.8px;top:141.2px;width:5.6px"></div>
<div class="mm" style="left:22.1px;top:141.2px;width:9.9px"></div>
<div class="mm" style="left:32.6px;top:141.2px;width:4.3px"></div>
<div class="mm" style="left:37.6px;top:141.2px;width:9.9px"></div>
<div class="mm" style="left:48.2px;top:141.2px;width:7.5px"></div>
<div class="mm" style="left:56.5px;top:141.2px;width:2.5px"></div>
<div class="mm" style="left:7.5px;top:142.5px;width:4.3px"></div>
<div class="mm" style="left:2.8px;top:145.0px;width:1.6px"></div>
<div class="mm" style="left:2.8px;top:147.5px;width:2.2px"></div>
<div class="mm" style="left:5.7px;top:147.5px;width:4.3px"></div>
<div class="mm" style="left:10.7px;top:147.5px;width:7.5px"></div>
<div class="mm" style="left:18.9px;top:147.5px;width:2.2px"></div>
<div class="mm" style="left:21.8px;top:147.5px;width:9.9px"></div>
<div class="mm" style="left:32.4px;top:147.5px;width:9.9px"></div>
<div class="mm" style="left:43.0px;top:147.5px;width:4.3px"></div>
<div class="mm" style="left:48.0px;top:147.5px;width:7.5px"></div>
<div class="mm" style="left:56.2px;top:147.5px;width:2.7px"></div>
<div class="mm" style="left:2.8px;top:148.8px;width:4.3px"></div>
<div class="mm" style="left:7.8px;top:148.8px;width:9.9px"></div>
<div class="mm" style="left:18.4px;top:148.8px;width:7.5px"></div>
<div class="mm" style="left:26.6px;top:148.8px;width:2.2px"></div>
<div class="mm" style="left:29.5px;top:148.8px;width:9.9px"></div>
<div class="mm" style="left:40.1px;top:148.8px;width:3.1px"></div>
<div class="mm" style="left:43.9px;top:148.8px;width:1.1px"></div>
<div class="mm" style="left:2.8px;top:150.0px;width:5.6px"></div>
<div class="mm" style="left:9.1px;top:150.0px;width:3.1px"></div>
<div class="mm" style="left:12.9px;top:150.0px;width:2.2px"></div>
<div class="mm" style="left:15.8px;top:150.0px;width:4.3px"></div>
<div class="mm" style="left:20.8px;top:150.0px;width:3.1px"></div>
<div class="mm" style="left:24.6px;top:150.0px;width:3.1px"></div>
<div class="mm" style="left:28.4px;top:150.0px;width:2.2px"></div>
<div class="mm" style="left:2.8px;top:151.2px;width:9.9px"></div>
<div class="mm" style="left:13.4px;top:151.2px;width:2.2px"></div>
<div class="mm" style="left:16.3px;top:151.2px;width:5.6px"></div>
<div class="mm" style="left:22.6px;top:151.2px;width:2.2px"></div>
<div class="mm" style="left:25.5px;top:151.2px;width:5.2px"></div>
<div class="mm" style="left:2.8px;top:152.5px;width:7.5px"></div>
<div class="mm" style="left:11.0px;top:152.5px;width:9.9px"></div>
<div class="mm" style="left:21.6px;top:152.5px;width:9.7px"></div>
<div class="mm" style="left:2.8px;top:154.8px;width:4.3px"></div>
<div class="mm" style="left:7.8px;top:154.8px;width:2.2px"></div>
<div class="mm" style="left:10.7px;top:154.8px;width:9.9px"></div>
<div class="mm" style="left:21.3px;top:154.8px;width:3.1px"></div>
<div class="mm" style="left:25.1px;top:154.8px;width:3.1px"></div>
<div class="mm" style="left:28.9px;top:154.8px;width:1.2px"></div>
<div class="mm" style="left:2.8px;top:156.0px;width:4.3px"></div>
<div class="mm" style="left:7.8px;top:156.0px;width:3.1px"></div>
<div class="mm" style="left:11.6px;top:156.0px;width:9.9px"></div>
<div class="mm" style="left:2.8px;top:158.5px;width:2.2px"></div>
<div class="mm" style="left:5.7px;top:158.5px;width:5.6px"></div>
<div class="mm" style="left:12.0px;top:158.5px;width:6.8px"></div>
<div class="mm" style="left:2.8px;top:161.5px;width:9.9px"></div>
<div class="mm" style="left:13.4px;top:161.5px;width:0.4px"></div>
<div class="mm" style="left:5.7px;top:162.8px;width:3.1px"></div>
<div class="mm" style="left:9.5px;top:162.8px;width:3.1px"></div>
<div class="mm" style="left:13.3px;top:162.8px;width:3.0px"></div>
<div class="mm" style="left:7.5px;top:164.0px;width:4.3px"></div>
<div class="mm" style="left:12.6px;top:164.0px;width:5.0px"></div>
<div class="mm" style="left:7.5px;top:165.2px;width:9.9px"></div>
<div class="mm" style="left:18.1px;top:165.2px;width:1.9px"></div>
<div class="mm" style="left:7.5px;top:166.5px;width:7.5px"></div>
<div class="mm" style="left:15.8px;top:166.5px;width:7.5px"></div>
<div class="mm" style="left:23.9px;top:166.5px;width:3.1px"></div>
<div class="mm" style="left:27.8px;top:166.5px;width:1.1px"></div>
<div class="mm" style="left:7.5px;top:167.8px;width:9.9px"></div>
<div class="mm" style="left:18.1px;top:167.8px;width:3.1px"></div>
<div class="mm" style="left:21.9px;top:167.8px;width:2.2px"></div>
<div class="mm" style="left:24.9px;top:167.8px;width:5.6px"></div>
<div class="mm" style="left:5.7px;top:169.0px;width:1.9px"></div>
<div class="mm" style="left:2.8px;top:170.2px;width:3.5px"></div>
<div class="mm" style="left:0.3px;top:173.8px;width:3.1px"></div>
<div class="mm" style="left:4.1px;top:173.8px;width:5.6px"></div>
<div class="mm" style="left:10.4px;top:173.8px;width:5.6px"></div>
<div class="mm" style="left:16.7px;top:173.8px;width:3.1px"></div>
<div class="mm" style="left:20.5px;top:173.8px;width:4.6px"></div>
<div class="mm" style="left:0.3px;top:175.2px;width:2.2px"></div>
<div class="mm" style="left:3.2px;top:175.2px;width:5.6px"></div>
<div class="mm" style="left:9.5px;top:175.2px;width:1.8px"></div>
<div class="mm" style="left:1.3px;top:176.5px;width:6.2px"></div>
<div class="mm" style="left:2.8px;top:177.5px;width:9.9px"></div>
<div class="mm" style="left:13.4px;top:177.5px;width:7.5px"></div>
<div class="mm" style="left:21.6px;top:177.5px;width:4.3px"></div>
<div class="mm" style="left:26.6px;top:177.5px;width:5.6px"></div>
<div class="mm" style="left:32.9px;top:177.5px;width:1.5px"></div>
<div class="mm" style="left:0.3px;top:180.0px;width:9.9px"></div>
<div class="mm" style="left:10.9px;top:180.0px;width:3.1px"></div>
<div class="mm" style="left:14.7px;top:180.0px;width:2.2px"></div>
<div class="mm" style="left:17.6px;top:180.0px;width:0.6px"></div>
<div class="mm" style="left:2.8px;top:181.2px;width:9.9px"></div>
<div class="mm" style="left:13.4px;top:181.2px;width:6.7px"></div>
<div class="mm" style="left:2.8px;top:182.5px;width:2.2px"></div>
<div class="mm" style="left:5.7px;top:182.5px;width:3.1px"></div>
<div class="mm" style="left:9.5px;top:182.5px;width:3.1px"></div>
<div class="mm" style="left:13.3px;top:182.5px;width:5.6px"></div>
<div class="mm" style="left:19.6px;top:182.5px;width:2.2px"></div>
<div class="mm" style="left:2.8px;top:184.8px;width:4.3px"></div>
<div class="mm" style="left:7.8px;top:184.8px;width:7.5px"></div>
<div class="mm" style="left:16.0px;top:184.8px;width:4.3px"></div>
<div class="mm" style="left:21.0px;top:184.8px;width:4.3px"></div>
<div class="mm" style="left:26.0px;top:184.8px;width:9.9px"></div>
<div class="mm" style="left:36.6px;top:184.8px;width:2.2px"></div>
<div class="mm" style="left:39.5px;top:184.8px;width:4.3px"></div>
<div class="mm" style="left:44.5px;top:184.8px;width:7.5px"></div>
<div class="mm" style="left:52.7px;top:184.8px;width:2.2px"></div>
<div class="mm" style="left:2.8px;top:186.0px;width:2.2px"></div>
<div class="mm" style="left:5.7px;top:186.0px;width:5.6px"></div>
<div class="mm" style="left:12.0px;top:186.0px;width:4.3px"></div>
<div class="mm" style="left:17.0px;top:186.0px;width:7.5px"></div>
<div class="mm" style="left:25.2px;top:186.0px;width:5.6px"></div>
<div class="mm" style="left:31.5px;top:186.0px;width:2.3px"></div>
<div class="mm" style="left:2.8px;top:187.2px;width:5.6px"></div>
<div class="mm" style="left:9.1px;top:187.2px;width:2.2px"></div>
<div class="mm" style="left:12.0px;top:187.2px;width:3.1px"></div>
<div class="mm" style="left:15.8px;top:187.2px;width:2.2px"></div>
<div class="mm" style="left:18.7px;top:187.2px;width:5.6px"></div>
<div class="mm" style="left:25.0px;top:187.2px;width:1.3px"></div>
<div class="mm" style="left:0.3px;top:189.8px;width:3.1px"></div>
<div class="mm" style="left:4.1px;top:189.8px;width:7.5px"></div>
<div class="mm" style="left:12.3px;top:189.8px;width:2.8px"></div>
<div class="mm" style="left:2.8px;top:191.2px;width:9.9px"></div>
<div class="mm" style="left:13.4px;top:191.2px;width:3.1px"></div>
<div class="mm" style="left:17.2px;top:191.2px;width:4.1px"></div>
<div class="mm" style="left:2.8px;top:192.5px;width:3.1px"></div>
<div class="mm" style="left:0.3px;top:196.2px;width:7.5px"></div>
<div class="mm" style="left:8.5px;top:196.2px;width:9.9px"></div>
<div class="mm" style="left:19.1px;top:196.2px;width:5.9px"></div>
<div class="mm" style="left:0.3px;top:197.8px;width:9.9px"></div>
<div class="mm" style="left:10.9px;top:197.8px;width:0.4px"></div>
<div class="mm" style="left:1.3px;top:199.0px;width:5.6px"></div>
<div class="mm" style="left:2.8px;top:200.0px;width:5.6px"></div>
<div class="mm" style="left:9.1px;top:200.0px;width:7.5px"></div>
<div class="mm" style="left:17.3px;top:200.0px;width:9.9px"></div>
<div class="mm" style="left:0.3px;top:202.5px;width:2.2px"></div>
<div class="mm" style="left:3.2px;top:202.5px;width:3.1px"></div>
<div class="mm" style="left:7.0px;top:202.5px;width:5.6px"></div>
<div class="mm" style="left:13.3px;top:202.5px;width:4.9px"></div>
<div class="mm" style="left:2.8px;top:203.8px;width:7.5px"></div>
<div class="mm" style="left:11.0px;top:203.8px;width:4.3px"></div>
<div class="mm" style="left:16.0px;top:203.8px;width:4.1px"></div>
<div class="mm" style="left:2.8px;top:205.0px;width:7.5px"></div>
<div class="mm" style="left:11.0px;top:205.0px;width:9.9px"></div>
<div class="mm" style="left:21.6px;top:205.0px;width:0.3px"></div>
<div class="mm" style="left:2.8px;top:207.2px;width:7.5px"></div>
<div class="mm" style="left:11.0px;top:207.2px;width:7.5px"></div>
<div class="mm" style="left:19.2px;top:207.2px;width:7.5px"></div>
<div class="mm" style="left:27.4px;top:207.2px;width:4.3px"></div>
<div class="mm" style="left:32.4px;top:207.2px;width:4.3px"></div>
<div class="mm" style="left:37.4px;top:207.2px;width:9.9px"></div>
<div class="mm" style="left:48.0px;top:207.2px;width:5.6px"></div>
<div class="mm" style="left:54.3px;top:207.2px;width:0.8px"></div>
<div class="mm" style="left:2.8px;top:208.5px;width:3.1px"></div>
<div class="mm" style="left:6.6px;top:208.5px;width:4.3px"></div>
<div class="mm" style="left:11.6px;top:208.5px;width:3.1px"></div>
<div class="mm" style="left:15.4px;top:208.5px;width:7.5px"></div>
<div class="mm" style="left:23.6px;top:208.5px;width:7.5px"></div>
<div class="mm" style="left:31.8px;top:208.5px;width:2.0px"></div>
<div class="mm" style="left:2.8px;top:209.8px;width:7.5px"></div>
<div class="mm" style="left:11.0px;top:209.8px;width:5.6px"></div>
<div class="mm" style="left:17.3px;top:209.8px;width:3.1px"></div>
<div class="mm" style="left:21.1px;top:209.8px;width:5.2px"></div>
<div class="mm" style="left:0.3px;top:212.2px;width:7.5px"></div>
<div class="mm" style="left:8.5px;top:212.2px;width:2.2px"></div>
<div class="mm" style="left:11.4px;top:212.2px;width:3.7px"></div>
<div class="mm" style="left:2.8px;top:213.8px;width:2.2px"></div>
<div class="mm" style="left:5.7px;top:213.8px;width:7.5px"></div>
<div class="mm" style="left:13.9px;top:213.8px;width:5.6px"></div>
<div class="mm" style="left:20.2px;top:213.8px;width:1.1px"></div>
<div class="mm" style="left:2.8px;top:215.0px;width:3.5px"></div>
<div class="mm" style="left:0.3px;top:219.8px;width:2.2px"></div>
<div class="mm" style="left:3.2px;top:219.8px;width:7.5px"></div>
<div class="mm" style="left:11.4px;top:219.8px;width:5.6px"></div>
<div class="mm" style="left:17.7px;top:219.8px;width:7.5px"></div>
<div class="mm" style="left:25.9px;top:219.8px;width:1.7px"></div>
<div class="mm" style="left:0.3px;top:221.2px;width:2.2px"></div>
<div class="mm" style="left:3.2px;top:221.2px;width:5.6px"></div>
<div class="mm" style="left:9.5px;top:221.2px;width:1.8px"></div>
<div class="mm" style="left:1.3px;top:222.2px;width:6.2px"></div>
<div class="mm" style="left:2.8px;top:223.4px;width:3.1px"></div>
<div class="mm" style="left:6.6px;top:223.4px;width:2.2px"></div>
<div class="mm" style="left:9.5px;top:223.4px;width:7.5px"></div>
<div class="mm" style="left:17.7px;top:223.4px;width:5.6px"></div>
<div class="mm" style="left:24.0px;top:223.4px;width:5.6px"></div>
<div class="mm" style="left:30.3px;top:223.4px;width:4.1px"></div>
<div class="mm" style="left:0.3px;top:226.0px;width:4.3px"></div>
<div class="mm" style="left:5.3px;top:226.0px;width:3.1px"></div>
<div class="mm" style="left:9.1px;top:226.0px;width:5.6px"></div>
<div class="mm" style="left:15.4px;top:226.0px;width:3.4px"></div>
<div class="mm" style="left:2.8px;top:227.5px;width:3.1px"></div>
<div class="mm" style="left:6.6px;top:227.5px;width:4.3px"></div>
<div class="mm" style="left:11.6px;top:227.5px;width:5.6px"></div>
<div class="mm" style="left:17.9px;top:227.5px;width:2.2px"></div>
<div class="mm" style="left:2.8px;top:228.8px;width:7.5px"></div>
<div class="mm" style="left:11.0px;top:228.8px;width:4.3px"></div>
<div class="mm" style="left:16.0px;top:228.8px;width:2.2px"></div>
<div class="mm" style="left:18.9px;top:228.8px;width:3.0px"></div>
<div class="mm" style="left:2.8px;top:230.9px;width:5.6px"></div>
<div class="mm" style="left:9.1px;top:230.9px;width:7.5px"></div>
<div class="mm" style="left:17.3px;top:230.9px;width:2.2px"></div>
<div class="mm" style="left:20.2px;top:230.9px;width:4.3px"></div>
<div class="mm" style="left:25.2px;top:230.9px;width:3.1px"></div>
<div class="mm" style="left:29.0px;top:230.9px;width:9.9px"></div>
<div class="mm" style="left:39.6px;top:230.9px;width:2.2px"></div>
<div class="mm" style="left:42.5px;top:230.9px;width:2.2px"></div>
<div class="mm" style="left:45.4px;top:230.9px;width:3.1px"></div>
<div class="mm" style="left:49.2px;top:230.9px;width:3.1px"></div>
<div class="mm" style="left:53.0px;top:230.9px;width:2.1px"></div>
<div class="mm" style="left:2.8px;top:232.1px;width:2.2px"></div>
<div class="mm" style="left:5.7px;top:232.1px;width:9.9px"></div>
<div class="mm" style="left:16.3px;top:232.1px;width:4.3px"></div>
<div class="mm" style="left:21.3px;top:232.1px;width:4.3px"></div>
<div class="mm" style="left:26.3px;top:232.1px;width:6.2px"></div>
<div class="mm" style="left:2.8px;top:233.4px;width:4.3px"></div>
<div class="mm" style="left:7.8px;top:233.4px;width:3.1px"></div>
<div class="mm" style="left:11.6px;top:233.4px;width:7.5px"></div>
<div class="mm" style="left:19.8px;top:233.4px;width:5.6px"></div>
<div class="mm" style="left:0.3px;top:235.2px;width:2.2px"></div>
<div class="mm" style="left:3.2px;top:235.2px;width:5.6px"></div>
<div class="mm" style="left:9.5px;top:235.2px;width:5.6px"></div>
<div class="mm" style="left:2.8px;top:236.5px;width:7.5px"></div>
<div class="mm" style="left:11.0px;top:236.5px;width:2.2px"></div>
<div class="mm" style="left:13.9px;top:236.5px;width:7.4px"></div>
<div class="mm" style="left:2.8px;top:237.8px;width:3.5px"></div>
<div class="mm" style="left:0.3px;top:242.5px;width:4.3px"></div>
<div class="mm" style="left:5.3px;top:242.5px;width:9.9px"></div>
<div class="mm" style="left:15.9px;top:242.5px;width:3.1px"></div>
<div class="mm" style="left:19.7px;top:242.5px;width:9.9px"></div>
<div class="mm" style="left:30.3px;top:242.5px;width:1.6px"></div>
<div class="mm" style="left:2.8px;top:243.8px;width:5.6px"></div>
<div class="mm" style="left:9.1px;top:243.8px;width:2.2px"></div>
<div class="mm" style="left:12.0px;top:243.8px;width:5.6px"></div>
<div class="mm" style="left:18.3px;top:243.8px;width:0.5px"></div>
<div class="mm" style="left:2.8px;top:245.0px;width:5.6px"></div>
<div class="mm" style="left:9.1px;top:245.0px;width:6.0px"></div>
<div class="mm" style="left:2.8px;top:246.2px;width:7.5px"></div>
<div class="mm" style="left:11.0px;top:246.2px;width:3.1px"></div>
<div class="mm" style="left:14.8px;top:246.2px;width:7.5px"></div>
<div class="mm" style="left:23.0px;top:246.2px;width:3.1px"></div>
<div class="mm" style="left:26.8px;top:246.2px;width:9.9px"></div>
<div class="mm" style="left:2.8px;top:247.5px;width:7.5px"></div>
<div class="mm" style="left:11.0px;top:247.5px;width:9.9px"></div>
<div class="mm" style="left:21.6px;top:247.5px;width:3.1px"></div>
<div class="mm" style="left:25.4px;top:247.5px;width:7.5px"></div>
<div class="mm" style="left:33.6px;top:247.5px;width:3.1px"></div>
<div class="mm" style="left:37.4px;top:247.5px;width:7.5px"></div>
<div class="mm" style="left:2.8px;top:248.8px;width:7.5px"></div>
<div class="mm" style="left:11.0px;top:248.8px;width:7.5px"></div>
<div class="mm" style="left:19.2px;top:248.8px;width:3.1px"></div>
<div class="mm" style="left:23.0px;top:248.8px;width:3.1px"></div>
<div class="mm" style="left:26.8px;top:248.8px;width:9.9px"></div>
<div class="mm" style="left:37.4px;top:248.8px;width:9.9px"></div>
<div class="mm" style="left:48.0px;top:248.8px;width:3.3px"></div>
<div class="mm" style="left:2.8px;top:250.0px;width:3.1px"></div>
<div class="mm" style="left:6.6px;top:250.0px;width:4.3px"></div>
<div class="mm" style="left:11.6px;top:250.0px;width:7.5px"></div>
<div class="mm" style="left:19.8px;top:250.0px;width:4.3px"></div>
<div class="mm" style="left:24.8px;top:250.0px;width:3.1px"></div>
<div class="mm" style="left:28.6px;top:250.0px;width:3.1px"></div>
<div class="mm" style="left:32.4px;top:250.0px;width:3.1px"></div>
<div class="mm" style="left:36.2px;top:250.0px;width:2.2px"></div>
<div class="mm" style="left:39.1px;top:250.0px;width:3.1px"></div>
<div class="mm" style="left:2.8px;top:251.2px;width:3.1px"></div>
<div class="mm" style="left:6.6px;top:251.2px;width:3.1px"></div>
<div class="mm" style="left:10.4px;top:251.2px;width:9.9px"></div>
<div class="mm" style="left:21.0px;top:251.2px;width:2.2px"></div>
<div class="mm" style="left:23.9px;top:251.2px;width:4.3px"></div>
<div class="mm" style="left:28.9px;top:251.2px;width:5.6px"></div>
<div class="mm" style="left:35.2px;top:251.2px;width:2.2px"></div>
<div class="mm" style="left:2.8px;top:252.5px;width:5.6px"></div>
<div class="mm" style="left:9.1px;top:252.5px;width:5.6px"></div>
<div class="mm" style="left:15.4px;top:252.5px;width:7.5px"></div>
<div class="mm" style="left:23.6px;top:252.5px;width:9.9px"></div>
<div class="mm" style="left:34.2px;top:252.5px;width:3.1px"></div>
<div class="mm" style="left:38.0px;top:252.5px;width:0.8px"></div>
<div class="mm" style="left:2.8px;top:253.8px;width:5.6px"></div>
<div class="mm" style="left:9.1px;top:253.8px;width:9.9px"></div>
<div class="mm" style="left:19.7px;top:253.8px;width:9.9px"></div>
<div class="mm" style="left:30.3px;top:253.8px;width:2.2px"></div>
<div class="mm" style="left:33.2px;top:253.8px;width:2.2px"></div>
<div class="mm" style="left:36.1px;top:253.8px;width:3.1px"></div>
<div class="mm" style="left:39.9px;top:253.8px;width:7.5px"></div>
<div class="mm" style="left:48.1px;top:253.8px;width:9.9px"></div>
<div class="mm" style="left:2.8px;top:256.0px;width:4.3px"></div>
<div class="mm" style="left:7.8px;top:256.0px;width:3.5px"></div>
<div class="mm" style="left:2.8px;top:257.5px;width:2.2px"></div>
<div class="mm" style="left:5.7px;top:257.5px;width:9.9px"></div>
<div class="mm" style="left:16.3px;top:257.5px;width:2.5px"></div>
<div class="mm" style="left:2.8px;top:259.8px;width:9.8px"></div>
<div class="mm" style="left:5.7px;top:261.0px;width:4.3px"></div>
<div class="mm" style="left:10.7px;top:261.0px;width:7.5px"></div>
<div class="mm" style="left:18.9px;top:261.0px;width:1.2px"></div>
<div class="mm" style="left:7.5px;top:262.2px;width:3.1px"></div>
<div class="mm" style="left:11.3px;top:262.2px;width:2.2px"></div>
<div class="mm" style="left:14.2px;top:262.2px;width:5.6px"></div>
<div class="mm" style="left:20.6px;top:262.2px;width:2.2px"></div>
<div class="mm" style="left:23.5px;top:262.2px;width:2.2px"></div>
<div class="mm" style="left:26.4px;top:262.2px;width:2.2px"></div>
<div class="mm" style="left:29.2px;top:262.2px;width:1.4px"></div>
<div class="mm" style="left:5.7px;top:263.8px;width:1.9px"></div>
<div class="mm" style="left:7.5px;top:264.8px;width:7.5px"></div>
<div class="mm" style="left:15.8px;top:264.8px;width:6.2px"></div>
<div class="mm" style="left:7.5px;top:266.0px;width:5.6px"></div>
<div class="mm" style="left:13.8px;top:266.0px;width:3.1px"></div>
<div class="mm" style="left:17.6px;top:266.0px;width:3.1px"></div>
<div class="mm" style="left:21.4px;top:266.0px;width:3.1px"></div>
<div class="mm" style="left:25.2px;top:266.0px;width:2.2px"></div>
<div class="mm" style="left:28.1px;top:266.0px;width:0.7px"></div>
<div class="mm" style="left:5.7px;top:267.5px;width:1.9px"></div>
<div class="mm" style="left:7.5px;top:268.8px;width:3.1px"></div>
<div class="mm" style="left:11.3px;top:268.8px;width:4.3px"></div>
<div class="mm" style="left:16.4px;top:268.8px;width:8.7px"></div>
<div class="mm" style="left:7.5px;top:270.0px;width:2.2px"></div>
<div class="mm" style="left:10.4px;top:270.0px;width:7.5px"></div>
<div class="mm" style="left:18.6px;top:270.0px;width:2.2px"></div>
<div class="mm" style="left:21.5px;top:270.0px;width:1.6px"></div>
<div class="mm" style="left:2.8px;top:271.9px;width:2.2px"></div>
<div class="mm" style="left:5.7px;top:273.1px;width:1.9px"></div>
<div class="mm" style="left:7.5px;top:274.8px;width:2.2px"></div>
<div class="mm" style="left:10.4px;top:274.8px;width:2.2px"></div>
<div class="mm" style="left:13.3px;top:274.8px;width:4.3px"></div>
<div class="mm" style="left:18.4px;top:274.8px;width:5.6px"></div>
<div class="mm" style="left:24.7px;top:274.8px;width:5.6px"></div>
<div class="mm" style="left:31.0px;top:274.8px;width:1.0px"></div>
<div class="mm" style="left:7.5px;top:276.0px;width:7.5px"></div>
<div class="mm" style="left:15.8px;top:276.0px;width:3.1px"></div>
<div class="mm" style="left:5.7px;top:277.2px;width:1.9px"></div>
<div class="mm" style="left:7.5px;top:278.5px;width:3.1px"></div>
<div class="mm" style="left:11.3px;top:278.5px;width:7.5px"></div>
<div class="mm" style="left:19.5px;top:278.5px;width:4.3px"></div>
<div class="mm" style="left:24.5px;top:278.5px;width:2.2px"></div>
<div class="mm" style="left:27.4px;top:278.5px;width:2.6px"></div>
<div class="mm" style="left:7.5px;top:279.8px;width:9.9px"></div>
<div class="mm" style="left:18.1px;top:279.8px;width:0.7px"></div>
<div class="mm" style="left:5.7px;top:281.0px;width:1.9px"></div>
<div class="mm" style="left:7.5px;top:282.5px;width:3.1px"></div>
<div class="mm" style="left:11.3px;top:282.5px;width:5.6px"></div>
<div class="mm" style="left:17.6px;top:282.5px;width:5.6px"></div>
<div class="mm" style="left:23.9px;top:282.5px;width:3.6px"></div>
<div class="mm" style="left:2.8px;top:284.4px;width:1.6px"></div>
<div class="mm" style="left:2.8px;top:287.5px;width:4.3px"></div>
<div class="mm" style="left:7.8px;top:287.5px;width:5.6px"></div>
<div class="mm" style="left:14.1px;top:287.5px;width:3.1px"></div>
<div class="mm" style="left:17.9px;top:287.5px;width:7.5px"></div>
<div class="mm" style="left:26.1px;top:287.5px;width:3.1px"></div>
<div class="mm" style="left:29.9px;top:287.5px;width:2.2px"></div>
<div class="mm" style="left:32.8px;top:287.5px;width:7.5px"></div>
<div class="mm" style="left:41.0px;top:287.5px;width:2.2px"></div>
<div class="mm" style="left:43.9px;top:287.5px;width:4.3px"></div>
<div class="mm" style="left:48.9px;top:287.5px;width:2.2px"></div>
<div class="mm" style="left:51.8px;top:287.5px;width:7.1px"></div>
<div class="mm" style="left:2.8px;top:288.8px;width:9.9px"></div>
<div class="mm" style="left:13.4px;top:288.8px;width:5.6px"></div>
<div class="mm" style="left:19.7px;top:288.8px;width:7.5px"></div>
<div class="mm" style="left:27.9px;top:288.8px;width:5.9px"></div>
<div class="mm" style="left:2.8px;top:290.0px;width:3.1px"></div>
<div class="mm" style="left:6.6px;top:290.0px;width:7.5px"></div>
<div class="mm" style="left:14.8px;top:290.0px;width:7.5px"></div>
<div class="mm" style="left:23.0px;top:290.0px;width:4.3px"></div>
<div class="mm" style="left:28.0px;top:290.0px;width:0.8px"></div>
<div class="mm" style="left:2.8px;top:291.2px;width:4.3px"></div>
<div class="mm" style="left:7.8px;top:291.2px;width:2.2px"></div>
<div class="mm" style="left:10.7px;top:291.2px;width:9.9px"></div>
<div class="mm" style="left:21.3px;top:291.2px;width:6.3px"></div>
<div class="mm" style="left:2.8px;top:293.8px;width:3.1px"></div>
<div class="mm" style="left:6.6px;top:293.8px;width:5.6px"></div>
<div class="mm" style="left:12.9px;top:293.8px;width:3.1px"></div>
<div class="mm" style="left:16.7px;top:293.8px;width:4.3px"></div>
<div class="mm" style="left:21.7px;top:293.8px;width:7.1px"></div>
<div class="mm" style="left:2.8px;top:295.0px;width:9.9px"></div>
<div class="mm" style="left:13.4px;top:295.0px;width:4.3px"></div>
<div class="mm" style="left:18.4px;top:295.0px;width:5.6px"></div>
<div class="mm" style="left:24.7px;top:295.0px;width:3.1px"></div>
<div class="mm" style="left:28.5px;top:295.0px;width:5.6px"></div>
<div class="mm" style="left:34.8px;top:295.0px;width:3.1px"></div>
<div class="mm" style="left:38.6px;top:295.0px;width:4.0px"></div>
<div class="mm" style="left:2.8px;top:297.5px;width:3.1px"></div>
<div class="mm" style="left:6.6px;top:297.5px;width:2.2px"></div>
<div class="mm" style="left:9.5px;top:297.5px;width:4.3px"></div>
<div class="mm" style="left:14.5px;top:297.5px;width:4.3px"></div>
<div class="mm" style="left:19.5px;top:297.5px;width:2.4px"></div>
<div class="mm" style="left:2.8px;top:299.8px;width:2.2px"></div>
<div class="mm" style="left:5.7px;top:299.8px;width:2.2px"></div>
<div class="mm" style="left:8.6px;top:299.8px;width:4.3px"></div>
<div class="mm" style="left:13.6px;top:299.8px;width:7.7px"></div>
<div class="mm" style="left:2.8px;top:301.0px;width:3.5px"></div>
<div class="mm" style="left:0.3px;top:303.5px;width:2.2px"></div>
<div class="mm" style="left:3.2px;top:303.5px;width:3.1px"></div>
<div class="mm" style="left:7.0px;top:303.5px;width:4.3px"></div>
<div class="mm" style="left:12.0px;top:303.5px;width:9.9px"></div>
<div class="mm" style="left:22.6px;top:303.5px;width:3.7px"></div>
<div class="mm" style="left:0.3px;top:305.0px;width:4.3px"></div>
<div class="mm" style="left:5.3px;top:305.0px;width:3.1px"></div>
<div class="mm" style="left:9.1px;top:305.0px;width:2.2px"></div>
<div class="mm" style="left:1.3px;top:306.2px;width:5.6px"></div>
<div class="mm" style="left:7.6px;top:306.2px;width:7.5px"></div>
<div class="mm" style="left:15.8px;top:306.2px;width:3.1px"></div>
<div class="mm" style="left:19.6px;top:306.2px;width:7.5px"></div>
<div class="mm" style="left:27.8px;top:306.2px;width:2.2px"></div>
<div class="mm" style="left:30.7px;top:306.2px;width:5.6px"></div>
<div class="mm" style="left:37.0px;top:306.2px;width:0.6px"></div>
<div class="mm" style="left:3.1px;top:309.2px;width:5.6px"></div>
<div class="mm" style="left:9.4px;top:309.2px;width:8.4px"></div>
<div class="mm" style="left:3.1px;top:310.3px;width:3.1px"></div>
<div class="mm" style="left:6.9px;top:310.3px;width:9.9px"></div>
<div class="mm" style="left:17.5px;top:310.3px;width:2.2px"></div>
<div class="mm" style="left:3.1px;top:311.6px;width:5.6px"></div>
<div class="mm" style="left:9.4px;top:311.6px;width:7.5px"></div>
<div class="mm" style="left:17.6px;top:311.6px;width:2.2px"></div>
<div class="mm" style="left:20.5px;top:311.6px;width:2.1px"></div>
<div class="mm" style="left:3.1px;top:313.7px;width:7.5px"></div>
<div class="mm" style="left:11.3px;top:313.7px;width:2.2px"></div>
<div class="mm" style="left:14.2px;top:313.7px;width:9.9px"></div>
<div class="mm" style="left:24.8px;top:313.7px;width:3.1px"></div>
<div class="mm" style="left:28.6px;top:313.7px;width:4.3px"></div>
<div class="mm" style="left:33.6px;top:313.7px;width:5.6px"></div>
<div class="mm" style="left:39.9px;top:313.7px;width:5.6px"></div>
<div class="mm" style="left:46.2px;top:313.7px;width:7.5px"></div>
<div class="mm" style="left:3.1px;top:315.1px;width:2.2px"></div>
<div class="mm" style="left:6.0px;top:315.1px;width:3.1px"></div>
<div class="mm" style="left:9.8px;top:315.1px;width:9.9px"></div>
<div class="mm" style="left:20.4px;top:315.1px;width:5.6px"></div>
<div class="mm" style="left:26.7px;top:315.1px;width:2.2px"></div>
<div class="mm" style="left:29.6px;top:315.1px;width:2.2px"></div>
<div class="mm" style="left:32.5px;top:315.1px;width:1.1px"></div>
<div class="mm" style="left:3.1px;top:316.4px;width:4.3px"></div>
<div class="mm" style="left:8.1px;top:316.4px;width:4.3px"></div>
<div class="mm" style="left:13.1px;top:316.4px;width:4.3px"></div>
<div class="mm" style="left:18.1px;top:316.4px;width:7.5px"></div>
<div class="mm" style="left:26.3px;top:316.4px;width:1.8px"></div>
<div class="mm" style="left:0.3px;top:318.8px;width:7.5px"></div>
<div class="mm" style="left:8.5px;top:318.8px;width:3.8px"></div>
<div class="mm" style="left:3.1px;top:321.3px;width:7.5px"></div>
<div class="mm" style="left:11.3px;top:321.3px;width:7.5px"></div>
<div class="mm" style="left:19.5px;top:321.3px;width:2.2px"></div>
<div class="mm" style="left:22.4px;top:321.3px;width:3.7px"></div>
<div class="mm" style="left:0.3px;top:323.7px;width:4.4px"></div>
<div class="mm" style="left:3.1px;top:325.1px;width:9.9px"></div>
<div class="mm" style="left:13.7px;top:325.1px;width:2.2px"></div>
<div class="mm" style="left:16.6px;top:325.1px;width:1.2px"></div>
<div class="mm" style="left:3.1px;top:326.2px;width:3.0px"></div>
<div class="mm" style="left:0.3px;top:329.5px;width:9.9px"></div>
<div class="mm" style="left:10.9px;top:329.5px;width:2.2px"></div>
<div class="mm" style="left:13.8px;top:329.5px;width:5.6px"></div>
<div class="mm" style="left:20.1px;top:329.5px;width:3.1px"></div>
<div class="mm" style="left:23.9px;top:329.5px;width:2.1px"></div>
<div class="mm" style="left:0.3px;top:330.9px;width:5.6px"></div>
<div class="mm" style="left:6.6px;top:330.9px;width:3.1px"></div>
<div class="mm" style="left:10.4px;top:330.9px;width:1.2px"></div>
<div class="mm" style="left:1.3px;top:332.0px;width:7.5px"></div>
<div class="mm" style="left:3.1px;top:332.9px;width:7.5px"></div>
<div class="mm" style="left:11.3px;top:332.9px;width:7.5px"></div>
<div class="mm" style="left:19.5px;top:332.9px;width:2.2px"></div>
<div class="mm" style="left:22.4px;top:332.9px;width:5.6px"></div>
<div class="mm" style="left:28.7px;top:332.9px;width:5.6px"></div>
<div class="mm" style="left:35.0px;top:332.9px;width:3.5px"></div>
<div class="mm" style="left:0.3px;top:335.0px;width:4.3px"></div>
<div class="mm" style="left:5.3px;top:335.0px;width:7.5px"></div>
<div class="mm" style="left:13.5px;top:335.0px;width:5.0px"></div>
<div class="mm" style="left:3.1px;top:336.4px;width:7.5px"></div>
<div class="mm" style="left:11.3px;top:336.4px;width:4.3px"></div>
<div class="mm" style="left:16.3px;top:336.4px;width:4.3px"></div>
<div class="mm" style="left:3.1px;top:337.5px;width:7.5px"></div>
<div class="mm" style="left:11.3px;top:337.5px;width:4.3px"></div>
<div class="mm" style="left:16.3px;top:337.5px;width:5.6px"></div>
<div class="mm" style="left:3.1px;top:339.4px;width:9.9px"></div>
<div class="mm" style="left:13.7px;top:339.4px;width:4.3px"></div>
<div class="mm" style="left:18.7px;top:339.4px;width:7.5px"></div>
<div class="mm" style="left:26.9px;top:339.4px;width:4.3px"></div>
<div class="mm" style="left:31.9px;top:339.4px;width:9.9px"></div>
<div class="mm" style="left:42.5px;top:339.4px;width:9.9px"></div>
<div class="mm" style="left:53.1px;top:339.4px;width:1.2px"></div>
<div class="mm" style="left:3.1px;top:340.8px;width:4.3px"></div>
<div class="mm" style="left:8.1px;top:340.8px;width:2.2px"></div>
<div class="mm" style="left:11.0px;top:340.8px;width:2.2px"></div>
<div class="mm" style="left:13.9px;top:340.8px;width:3.1px"></div>
<div class="mm" style="left:17.7px;top:340.8px;width:7.5px"></div>
<div class="mm" style="left:25.9px;top:340.8px;width:2.2px"></div>
<div class="mm" style="left:28.8px;top:340.8px;width:4.8px"></div>
<div class="mm" style="left:3.1px;top:341.9px;width:3.1px"></div>
<div class="mm" style="left:6.9px;top:341.9px;width:4.7px"></div>
<div class="mm" style="left:0.3px;top:344.0px;width:9.9px"></div>
<div class="mm" style="left:3.1px;top:344.9px;width:5.6px"></div>
<div class="mm" style="left:9.4px;top:344.9px;width:2.2px"></div>
<div class="mm" style="left:12.3px;top:344.9px;width:4.3px"></div>
<div class="mm" style="left:17.3px;top:344.9px;width:7.4px"></div>
<div class="mm" style="left:0.3px;top:347.4px;width:4.4px"></div>
<div class="mm" style="left:3.1px;top:348.8px;width:2.2px"></div>
<div class="mm" style="left:6.0px;top:348.8px;width:7.5px"></div>
<div class="mm" style="left:14.2px;top:348.8px;width:3.6px"></div>
<div class="mm" style="left:3.1px;top:349.9px;width:3.0px"></div>
<div class="mm" style="left:0.3px;top:353.6px;width:2.2px"></div>
<div class="mm" style="left:3.2px;top:353.6px;width:3.1px"></div>
<div class="mm" style="left:7.0px;top:353.6px;width:5.6px"></div>
<div class="mm" style="left:13.3px;top:353.6px;width:9.9px"></div>
<div class="mm" style="left:23.9px;top:353.6px;width:4.9px"></div>
<div class="mm" style="left:3.1px;top:355.0px;width:4.3px"></div>
<div class="mm" style="left:8.1px;top:355.0px;width:3.1px"></div>
<div class="mm" style="left:11.9px;top:355.0px;width:2.2px"></div>
<div class="mm" style="left:14.8px;top:355.0px;width:3.0px"></div>
<div class="mm" style="left:3.1px;top:355.9px;width:2.2px"></div>
<div class="mm" style="left:6.0px;top:355.9px;width:9.9px"></div>
<div class="mm" style="left:16.6px;top:355.9px;width:5.6px"></div>
<div class="mm" style="left:22.9px;top:355.9px;width:3.1px"></div>
<div class="mm" style="left:26.7px;top:355.9px;width:3.1px"></div>
<div class="mm" style="left:30.5px;top:355.9px;width:4.5px"></div>
<div class="mm" style="left:3.1px;top:357.0px;width:9.9px"></div>
<div class="mm" style="left:13.7px;top:357.0px;width:2.2px"></div>
<div class="mm" style="left:16.6px;top:357.0px;width:2.2px"></div>
<div class="mm" style="left:19.5px;top:357.0px;width:7.5px"></div>
<div class="mm" style="left:27.7px;top:357.0px;width:5.6px"></div>
<div class="mm" style="left:34.0px;top:357.0px;width:5.6px"></div>
<div class="mm" style="left:3.1px;top:358.4px;width:2.2px"></div>
<div class="mm" style="left:6.0px;top:358.4px;width:3.1px"></div>
<div class="mm" style="left:9.8px;top:358.4px;width:2.2px"></div>
<div class="mm" style="left:12.7px;top:358.4px;width:4.3px"></div>
<div class="mm" style="left:17.7px;top:358.4px;width:7.5px"></div>
<div class="mm" style="left:25.9px;top:358.4px;width:3.1px"></div>
<div class="mm" style="left:29.7px;top:358.4px;width:2.2px"></div>
<div class="mm" style="left:32.6px;top:358.4px;width:3.8px"></div>
<div class="mm" style="left:3.1px;top:359.8px;width:5.6px"></div>
<div class="mm" style="left:9.4px;top:359.8px;width:3.1px"></div>
<div class="mm" style="left:13.2px;top:359.8px;width:9.9px"></div>
<div class="mm" style="left:23.8px;top:359.8px;width:5.6px"></div>
<div class="mm" style="left:3.1px;top:360.9px;width:5.6px"></div>
<div class="mm" style="left:9.4px;top:360.9px;width:7.5px"></div>
<div class="mm" style="left:17.6px;top:360.9px;width:4.3px"></div>
<div class="mm" style="left:22.6px;top:360.9px;width:9.9px"></div>
<div class="mm" style="left:33.2px;top:360.9px;width:7.5px"></div>
<div class="mm" style="left:41.4px;top:360.9px;width:9.9px"></div>
<div class="mm" style="left:52.0px;top:360.9px;width:2.3px"></div>
<div class="mm" style="left:3.1px;top:362.2px;width:4.3px"></div>
<div class="mm" style="left:8.1px;top:362.2px;width:4.9px"></div>
<div class="mm" style="left:0.3px;top:364.6px;width:7.5px"></div>
<div class="mm" style="left:8.5px;top:364.6px;width:3.1px"></div>
<div class="mm" style="left:12.3px;top:364.6px;width:4.3px"></div>
<div class="mm" style="left:17.3px;top:364.6px;width:1.2px"></div>
<div class="mm" style="left:3.1px;top:366.0px;width:3.1px"></div>
<div class="mm" style="left:6.9px;top:366.0px;width:3.1px"></div>
<div class="mm" style="left:10.7px;top:366.0px;width:5.1px"></div>
<div class="mm" style="left:3.1px;top:367.3px;width:2.2px"></div>
<div class="mm" style="left:6.0px;top:367.3px;width:7.5px"></div>
<div class="mm" style="left:14.2px;top:367.3px;width:4.3px"></div>
<div class="mm" style="left:19.2px;top:367.3px;width:7.5px"></div>
<div class="mm" style="left:27.4px;top:367.3px;width:7.5px"></div>
<div class="mm" style="left:35.6px;top:367.3px;width:4.3px"></div>
<div class="mm" style="left:40.6px;top:367.3px;width:4.3px"></div>
<div class="mm" style="left:45.6px;top:367.3px;width:4.3px"></div>
<div class="mm" style="left:50.6px;top:367.3px;width:7.5px"></div>
<div class="mm" style="left:3.1px;top:369.7px;width:9.9px"></div>
<div class="mm" style="left:13.7px;top:369.7px;width:9.9px"></div>
<div class="mm" style="left:24.3px;top:369.7px;width:7.5px"></div>
<div class="mm" style="left:32.5px;top:369.7px;width:9.9px"></div>
<div class="mm" style="left:43.1px;top:369.7px;width:7.5px"></div>
<div class="mm" style="left:51.3px;top:369.7px;width:3.1px"></div>
<div class="mm" style="left:55.1px;top:369.7px;width:4.0px"></div>
<div class="mm" style="left:3.1px;top:371.0px;width:4.3px"></div>
<div class="mm" style="left:8.1px;top:371.0px;width:3.1px"></div>
<div class="mm" style="left:11.9px;top:371.0px;width:3.1px"></div>
<div class="mm" style="left:15.7px;top:371.0px;width:3.1px"></div>
<div class="mm" style="left:19.5px;top:371.0px;width:7.5px"></div>
<div class="mm" style="left:27.7px;top:371.0px;width:6.6px"></div>
<div class="mm" style="left:3.1px;top:373.5px;width:3.1px"></div>
<div class="mm" style="left:6.9px;top:373.5px;width:9.9px"></div>
<div class="mm" style="left:17.5px;top:373.5px;width:2.2px"></div>
<div class="mm" style="left:20.4px;top:373.5px;width:8.4px"></div>
<div class="mm" style="left:3.1px;top:374.9px;width:2.2px"></div>
<div class="mm" style="left:6.0px;top:374.9px;width:2.2px"></div>
<div class="mm" style="left:8.9px;top:374.9px;width:4.1px"></div>
<div class="mm" style="left:5.4px;top:376.3px;width:4.3px"></div>
<div class="mm" style="left:10.4px;top:376.3px;width:5.3px"></div>
<div class="mm" style="left:8.1px;top:377.7px;width:2.2px"></div>
<div class="mm" style="left:11.0px;top:377.7px;width:7.5px"></div>
<div class="mm" style="left:19.2px;top:377.7px;width:2.2px"></div>
<div class="mm" style="left:22.1px;top:377.7px;width:2.2px"></div>
<div class="mm" style="left:25.0px;top:377.7px;width:3.1px"></div>
<div class="mm" style="left:28.8px;top:377.7px;width:4.7px"></div>
<div class="mm" style="left:8.1px;top:378.8px;width:4.3px"></div>
<div class="mm" style="left:13.1px;top:378.8px;width:2.2px"></div>
<div class="mm" style="left:16.0px;top:378.8px;width:2.2px"></div>
<div class="mm" style="left:18.9px;top:378.8px;width:9.9px"></div>
<div class="mm" style="left:29.5px;top:378.8px;width:3.1px"></div>
<div class="mm" style="left:33.3px;top:378.8px;width:5.7px"></div>
<div class="mm" style="left:8.1px;top:380.1px;width:3.1px"></div>
<div class="mm" style="left:11.9px;top:380.1px;width:9.9px"></div>
<div class="mm" style="left:22.5px;top:380.1px;width:4.3px"></div>
<div class="mm" style="left:27.5px;top:380.1px;width:5.6px"></div>
<div class="mm" style="left:33.8px;top:380.1px;width:5.6px"></div>
<div class="mm" style="left:40.1px;top:380.1px;width:1.0px"></div>
<div class="mm" style="left:8.1px;top:381.5px;width:3.1px"></div>
<div class="mm" style="left:11.9px;top:381.5px;width:4.3px"></div>
<div class="mm" style="left:16.9px;top:381.5px;width:4.3px"></div>
<div class="mm" style="left:21.9px;top:381.5px;width:5.6px"></div>
<div class="mm" style="left:28.2px;top:381.5px;width:1.2px"></div>
<div class="mm" style="left:8.1px;top:382.9px;width:3.1px"></div>
<div class="mm" style="left:11.9px;top:382.9px;width:2.2px"></div>
<div class="mm" style="left:14.8px;top:382.9px;width:2.2px"></div>
<div class="mm" style="left:17.7px;top:382.9px;width:5.6px"></div>
<div class="mm" style="left:24.0px;top:382.9px;width:0.6px"></div>
<div class="mm" style="left:5.4px;top:384.3px;width:3.1px"></div>
<div class="mm" style="left:9.2px;top:384.3px;width:2.4px"></div>
<div class="mm" style="left:8.1px;top:385.9px;width:5.6px"></div>
<div class="mm" style="left:14.4px;top:385.9px;width:9.9px"></div>
<div class="mm" style="left:25.0px;top:385.9px;width:4.3px"></div>
<div class="mm" style="left:8.1px;top:387.3px;width:5.6px"></div>
<div class="mm" style="left:14.4px;top:387.3px;width:2.6px"></div>
<div class="mm" style="left:5.4px;top:389.3px;width:2.1px"></div>
<div class="mm" style="left:7.5px;top:390.7px;width:3.1px"></div>
<div class="mm" style="left:11.3px;top:390.7px;width:6.5px"></div>
</div>
<div class="abs" style="left:1001px;top:54px;width:59px;height:1px;background:#2f4872"></div>
<div id="panel" class="abs">
<div class="ptab" style="left:15.0px;">问题</div>
<div class="ptab" style="left:48.5px;">输出</div>
<div class="ptab" style="left:81.6px;color:#d7dae0">终端</div>
<div class="ptab" style="left:115.6px;">调试控制台</div>
<div class="abs" style="left:80.5px;top:20.4px;width:18.5px;height:1px;background:#abb2bf"></div>
<div class="abs" style="left:15px;top:33.4px;font-family:'Liberation Mono',monospace;font-size:8.7px;line-height:13px;color:#abb2bf;white-space:pre">peiqi@192 secgate 2 % </div>
<div class="abs" style="left:129.5px;top:33.5px;width:5.8px;height:10.8px;border:1px solid #abb2bf"></div>
</div>
<svg class="abs" style="left:940px;top:430px" width="120" height="16" viewBox="0 0 120 16" fill="none" stroke="#b3b9c5" stroke-width="1" stroke-linecap="round" stroke-linejoin="round"><rect x="3.2" y="3.7" width="9.2" height="10" rx="1"/><path d="M6.2 6.500l2.200 2.200-2.200 2.200" stroke-width="1"/><path d="M42.900 4.200v9.200 M38.300 8.800h9.200" stroke-width="1.2"/><path d="M52 7.300l2.800 2.800 2.800-2.800" stroke="#8a909b" stroke-width="1"/><rect x="66.900" y="3.700" width="9.200" height="9.600" rx=".8"/><path d="M71.500 3.700v9.600"/><path d="M85.800 5h8.600 M88.300 5v-1.600h3.600v1.600" /><path d="M86.800 5.300h6.600v7.200a.8 .8 0 0 1-.8 .8h-5a.8 .8 0 0 1-.8-.8z" fill="#9ba1ad" stroke-width=".9"/><path d="M105.600 10.300l3.500-3.500 3.500 3.500" stroke-width="1.2"/></svg>
<div class="abs" style="left:956.6px;top:434.3px;font-size:8.6px;line-height:10px;color:#ccd0d8;letter-spacing:.15px">zsh</div>
</body></html>
